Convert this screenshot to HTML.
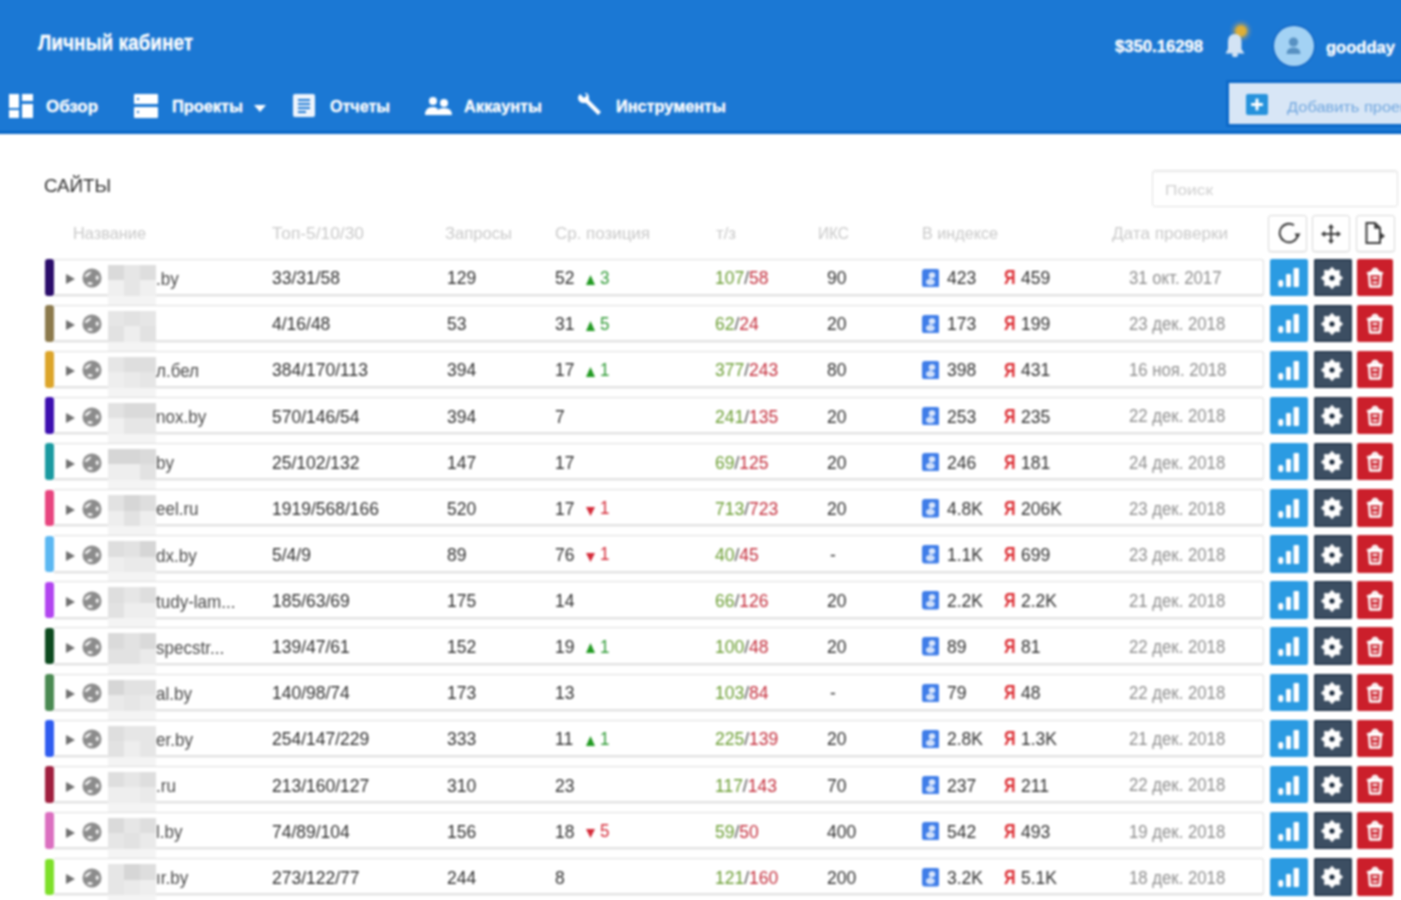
<!DOCTYPE html>
<html><head><meta charset="utf-8"><style>
html,body{margin:0;padding:0;width:1401px;height:900px;overflow:hidden;background:#fff;font-family:"Liberation Sans", sans-serif}
</style></head><body><div id="wrap" style="position:absolute;left:0;top:0;width:1401px;height:900px;filter:blur(1px)">
<div style="position:absolute;left:-12px;top:-12px;width:1425px;height:146px;background:#1b78d4"></div>
<div style="position:absolute;left:-12px;top:131px;width:1425px;height:3px;background:#0866c6"></div>
<svg style="position:absolute;left:9px;top:94px" width="24" height="24" viewBox="0 0 24 24"><g fill="#fff"><rect x="0" y="0" width="10" height="14"/><rect x="13" y="0" width="11" height="7"/><rect x="0" y="16" width="10" height="8"/><rect x="13" y="10" width="11" height="14"/></g></svg>
<svg style="position:absolute;left:134px;top:94px" width="24" height="24" viewBox="0 0 24 24"><g fill="#fff"><rect x="0" y="0" width="24" height="10" rx="1"/><rect x="0" y="13" width="24" height="11" rx="1"/></g><g fill="#1b78d4"><rect x="3" y="4" width="2" height="2"/><rect x="3" y="17" width="2" height="2"/></g></svg>
<svg style="position:absolute;left:254px;top:104.5px" width="12" height="7" viewBox="0 0 12 7"><path d="M0 0 L12 0 L6 7 Z" fill="#fff"/></svg>
<svg style="position:absolute;left:293px;top:94px" width="22" height="23" viewBox="0 0 22 23"><rect x="0" y="0" width="22" height="23" rx="2" fill="#eef4fc"/><g fill="#1b78d4"><rect x="5" y="5" width="12" height="2"/><rect x="5" y="9" width="12" height="2"/><rect x="5" y="13" width="12" height="2"/><rect x="5" y="17" width="8" height="2"/></g></svg>
<svg style="position:absolute;left:425px;top:96px" width="27" height="20" viewBox="0 0 27 20"><g fill="#fff"><circle cx="8" cy="5" r="4"/><path d="M0 19 Q0 11 8 11 Q13 11 13 15 L13 19 Z"/><circle cx="19" cy="7" r="4"/><path d="M11 19 Q11 12 19 12 Q27 12 27 19 Z"/></g></svg>
<svg style="position:absolute;left:577px;top:93px" width="25" height="23" viewBox="0 0 25 23"><path d="M3 1 L7 5 L10 2 L6 -1 Q12 -1 12 5 L12 7 L24 19 L21 22 L9 10 L7 10 Q1 10 1 4 Z" fill="#fff"/></svg>
<div style="position:absolute;left:1229px;top:19px;width:24px;height:24px;border-radius:50%;background:radial-gradient(circle, #e2b035 0, #dcae38 4.5px, rgba(190,165,85,0.6) 6.5px, rgba(120,140,150,0.35) 9px, rgba(30,120,211,0) 12px)"></div>
<svg style="position:absolute;left:1224px;top:32px" width="22" height="26" viewBox="0 0 22 26"><path d="M1.5 21.5 L20.5 21.5 L17.5 17 L17.5 9.5 Q17.5 2 11 2 Q4 2 4 9.5 L4 17 Z" fill="#d3e3f4"/><rect x="8" y="21" width="6" height="4" rx="2" fill="#d3e3f4"/></svg>
<div style="position:absolute;left:1274px;top:26px;width:39.5px;height:39.5px;border-radius:50%;background:#a3d2f4;box-shadow:0 0 0 1.5px #1366c4"></div>
<svg style="position:absolute;left:1283px;top:35px" width="21" height="21" viewBox="0 0 21 21"><circle cx="10.5" cy="7" r="4.6" fill="#5891c2"/><path d="M3.5 19 Q3.5 12.5 10.5 12.5 Q17.5 12.5 17.5 19 Z" fill="#5891c2"/></svg>
<div style="position:absolute;left:1229px;top:83px;width:190px;height:40.5px;background:#d8e6f6;box-shadow:0 0 0 3px #0c69c9"></div>
<svg style="position:absolute;left:1246px;top:94px" width="22" height="21" viewBox="0 0 22 21"><rect x="0" y="0" width="22" height="21" rx="2" fill="#2592dc"/><rect x="9.5" y="4.5" width="3" height="12" rx="1" fill="#fff"/><rect x="5" y="9" width="12" height="3" rx="1" fill="#fff"/></svg>
<div style="position:absolute;left:1152px;top:170px;width:246px;height:37px;border:1px solid #e2e2e2;border-radius:3px;box-sizing:border-box;box-shadow:inset 0 2px 1px rgba(0,0,0,0.045)"></div>
<div style="position:absolute;left:1268px;top:215px;width:39px;height:37px;border:1px solid #d9d9d9;border-radius:3px;box-sizing:border-box;background:#fff;box-shadow:0 1px 1px rgba(0,0,0,0.06)"></div>
<div style="position:absolute;left:1312px;top:215px;width:38px;height:37px;border:1px solid #d9d9d9;border-radius:3px;box-sizing:border-box;background:#fff;box-shadow:0 1px 1px rgba(0,0,0,0.06)"></div>
<div style="position:absolute;left:1356px;top:215px;width:39px;height:37px;border:1px solid #d9d9d9;border-radius:3px;box-sizing:border-box;background:#fff;box-shadow:0 1px 1px rgba(0,0,0,0.06)"></div>
<svg style="position:absolute;left:1275.5px;top:220px" width="26" height="26" viewBox="0 0 26 26"><path d="M17.93 5.11 A9.3 9.3 0 1 0 21.43 16.93" fill="none" stroke="#333" stroke-width="1.9"/><path d="M18.5 13.5 L24.5 13.5 L21.5 18.5 Z" fill="#333"/></svg>
<svg style="position:absolute;left:1321px;top:224px" width="20" height="20" viewBox="0 0 20 20"><g fill="#333"><rect x="9.1" y="3" width="1.8" height="14"/><rect x="3" y="9.1" width="14" height="1.8"/><path d="M10 0 L13 4 L7 4 Z"/><path d="M10 20 L13 16 L7 16 Z"/><path d="M0 10 L4 7 L4 13 Z"/><path d="M20 10 L16 7 L16 13 Z"/></g></svg>
<svg style="position:absolute;left:1364px;top:222px" width="24" height="23" viewBox="0 0 24 23"><path d="M2.5 1 L11 1 L16 6 L16 21 L2.5 21 Z" fill="none" stroke="#3a3a3a" stroke-width="2"/><path d="M11 1 L11 6 L16 6" fill="#3a3a3a" stroke="#3a3a3a" stroke-width="1.5"/><path d="M16 10 L21 14 L16 18 Z" fill="#3a3a3a"/></svg>
<div style="position:absolute;left:54px;top:258.50px;width:1209.5px;height:37.3px;border:1px solid #dedede;border-bottom:2px solid #e2e2e2;border-left:none;border-radius:0 3px 3px 0;box-sizing:border-box;background:#fff;box-shadow:0 1px 1px rgba(0,0,0,0.05)"></div>
<div style="position:absolute;left:44.5px;top:259.00px;width:9.5px;height:36.5px;background:#2b0d6b;border-radius:3px"></div>
<svg style="position:absolute;left:66px;top:274.20px" width="9" height="10" viewBox="0 0 9 10"><path d="M0 0 L9 5 L0 10 Z" fill="#707070"/></svg>
<svg style="position:absolute;left:82px;top:268.20px" width="20" height="20" viewBox="0 0 20 20"><circle cx="10" cy="10" r="9.5" fill="#8c8c8c"/><path d="M2.5 8.5 Q4 4.5 9.5 3.5 Q9 6 6 8 Q4.5 9.5 2.5 8.5 Z" fill="#f2f2f2"/><ellipse cx="15.2" cy="9.8" rx="1.6" ry="2.2" fill="#f4f4f4"/><path d="M5 15.5 Q8 12.5 11 15.5 Q8.5 18 5 15.5 Z" fill="#fff"/></svg>
<div style="position:absolute;left:108px;top:264.50px;width:16px;height:15.5px;background:rgb(218,218,218)"></div>
<div style="position:absolute;left:108px;top:280.00px;width:16px;height:15.5px;background:rgb(240,240,240)"></div>
<div style="position:absolute;left:124px;top:264.50px;width:16px;height:15.5px;background:rgb(230,230,230)"></div>
<div style="position:absolute;left:124px;top:280.00px;width:16px;height:15.5px;background:rgb(230,230,230)"></div>
<div style="position:absolute;left:140px;top:264.50px;width:16px;height:15.5px;background:rgb(222,222,222)"></div>
<div style="position:absolute;left:140px;top:280.00px;width:16px;height:15.5px;background:rgb(240,240,240)"></div>
<div style="position:absolute;left:108px;top:295.50px;width:48px;height:9.6px;background:#f4f4f4"></div>
<svg style="position:absolute;left:585.5px;top:274.50px" width="9" height="10" viewBox="0 0 9 10"><path d="M4.5 0 L9 10 L0 10 Z" fill="#229a22"/></svg>
<svg style="position:absolute;left:921.5px;top:268.50px" width="17.5" height="18.5" viewBox="0 0 18 19"><rect width="18" height="19" rx="3" fill="#3f7de8"/><ellipse cx="10.3" cy="6.3" rx="3.3" ry="3" fill="#dbe7fc"/><path d="M8.5 8 L11 8.5 L9.5 10.5 L7.5 10 Z" fill="#c9daf9"/><ellipse cx="8.6" cy="13.4" rx="4.6" ry="3.2" fill="#d2e1fb"/></svg>
<div style="position:absolute;left:1270px;top:258.50px;width:37.5px;height:37.5px;background:#2b9be2;border-radius:2px"></div>
<svg style="position:absolute;left:1278px;top:268.30px" width="22" height="20" viewBox="0 0 22 20"><g fill="#fff"><rect x="0.3" y="12" width="5" height="7" rx="2"/><rect x="8" y="6" width="5" height="13" rx="1"/><rect x="15.5" y="0" width="5.5" height="19" rx="1"/></g></svg>
<div style="position:absolute;left:1314px;top:258.50px;width:37.5px;height:37.5px;background:#3c4e62;border-radius:2px;box-shadow:inset 0 0 0 1.5px #23354a"></div>
<svg style="position:absolute;left:1321px;top:266.80px" width="22" height="22" viewBox="0 0 22 22"><path d="M11.00 0.70 L13.91 3.98 L18.28 3.72 L18.02 8.09 L21.30 11.00 L18.02 13.91 L18.28 18.28 L13.91 18.02 L11.00 21.30 L8.09 18.02 L3.72 18.28 L3.98 13.91 L0.70 11.00 L3.98 8.09 L3.72 3.72 L8.09 3.98 Z" fill="#fff" stroke="#fff" stroke-width="1.2" stroke-linejoin="round"/><circle cx="11" cy="11" r="2.6" fill="#1c2b3c"/></svg>
<div style="position:absolute;left:1357px;top:258.50px;width:36px;height:37.5px;background:#cb1f2b;border-radius:2px"></div>
<svg style="position:absolute;left:1365px;top:266.80px" width="20" height="22" viewBox="0 0 20 22"><g fill="none" stroke="#fff" stroke-width="2.3" stroke-linejoin="round"><path d="M4 7 L16 7 L15 19.5 L5 19.5 Z"/><path d="M2 6.5 Q10 3 18 6.5"/><path d="M7.5 4.5 Q7.5 2 10 2 Q12.5 2 12.5 4.5"/></g><g fill="#fff"><rect x="7.5" y="10" width="5" height="2"/><rect x="7.5" y="14.5" width="5" height="2"/></g></svg>
<div style="position:absolute;left:54px;top:304.62px;width:1209.5px;height:37.3px;border:1px solid #dedede;border-bottom:2px solid #e2e2e2;border-left:none;border-radius:0 3px 3px 0;box-sizing:border-box;background:#fff;box-shadow:0 1px 1px rgba(0,0,0,0.05)"></div>
<div style="position:absolute;left:44.5px;top:305.12px;width:9.5px;height:36.5px;background:#8c7a4c;border-radius:3px"></div>
<svg style="position:absolute;left:66px;top:320.32px" width="9" height="10" viewBox="0 0 9 10"><path d="M0 0 L9 5 L0 10 Z" fill="#707070"/></svg>
<svg style="position:absolute;left:82px;top:314.32px" width="20" height="20" viewBox="0 0 20 20"><circle cx="10" cy="10" r="9.5" fill="#8c8c8c"/><path d="M2.5 8.5 Q4 4.5 9.5 3.5 Q9 6 6 8 Q4.5 9.5 2.5 8.5 Z" fill="#f2f2f2"/><ellipse cx="15.2" cy="9.8" rx="1.6" ry="2.2" fill="#f4f4f4"/><path d="M5 15.5 Q8 12.5 11 15.5 Q8.5 18 5 15.5 Z" fill="#fff"/></svg>
<div style="position:absolute;left:108px;top:310.62px;width:16px;height:15.5px;background:rgb(230,230,230)"></div>
<div style="position:absolute;left:108px;top:326.12px;width:16px;height:15.5px;background:rgb(226,226,226)"></div>
<div style="position:absolute;left:124px;top:310.62px;width:16px;height:15.5px;background:rgb(226,226,226)"></div>
<div style="position:absolute;left:124px;top:326.12px;width:16px;height:15.5px;background:rgb(238,238,238)"></div>
<div style="position:absolute;left:140px;top:310.62px;width:16px;height:15.5px;background:rgb(230,230,230)"></div>
<div style="position:absolute;left:140px;top:326.12px;width:16px;height:15.5px;background:rgb(226,226,226)"></div>
<div style="position:absolute;left:108px;top:341.62px;width:48px;height:9.6px;background:#f4f4f4"></div>
<svg style="position:absolute;left:585.5px;top:320.62px" width="9" height="10" viewBox="0 0 9 10"><path d="M4.5 0 L9 10 L0 10 Z" fill="#229a22"/></svg>
<svg style="position:absolute;left:921.5px;top:314.62px" width="17.5" height="18.5" viewBox="0 0 18 19"><rect width="18" height="19" rx="3" fill="#3f7de8"/><ellipse cx="10.3" cy="6.3" rx="3.3" ry="3" fill="#dbe7fc"/><path d="M8.5 8 L11 8.5 L9.5 10.5 L7.5 10 Z" fill="#c9daf9"/><ellipse cx="8.6" cy="13.4" rx="4.6" ry="3.2" fill="#d2e1fb"/></svg>
<div style="position:absolute;left:1270px;top:304.62px;width:37.5px;height:37.5px;background:#2b9be2;border-radius:2px"></div>
<svg style="position:absolute;left:1278px;top:314.42px" width="22" height="20" viewBox="0 0 22 20"><g fill="#fff"><rect x="0.3" y="12" width="5" height="7" rx="2"/><rect x="8" y="6" width="5" height="13" rx="1"/><rect x="15.5" y="0" width="5.5" height="19" rx="1"/></g></svg>
<div style="position:absolute;left:1314px;top:304.62px;width:37.5px;height:37.5px;background:#3c4e62;border-radius:2px;box-shadow:inset 0 0 0 1.5px #23354a"></div>
<svg style="position:absolute;left:1321px;top:312.92px" width="22" height="22" viewBox="0 0 22 22"><path d="M11.00 0.70 L13.91 3.98 L18.28 3.72 L18.02 8.09 L21.30 11.00 L18.02 13.91 L18.28 18.28 L13.91 18.02 L11.00 21.30 L8.09 18.02 L3.72 18.28 L3.98 13.91 L0.70 11.00 L3.98 8.09 L3.72 3.72 L8.09 3.98 Z" fill="#fff" stroke="#fff" stroke-width="1.2" stroke-linejoin="round"/><circle cx="11" cy="11" r="2.6" fill="#1c2b3c"/></svg>
<div style="position:absolute;left:1357px;top:304.62px;width:36px;height:37.5px;background:#cb1f2b;border-radius:2px"></div>
<svg style="position:absolute;left:1365px;top:312.92px" width="20" height="22" viewBox="0 0 20 22"><g fill="none" stroke="#fff" stroke-width="2.3" stroke-linejoin="round"><path d="M4 7 L16 7 L15 19.5 L5 19.5 Z"/><path d="M2 6.5 Q10 3 18 6.5"/><path d="M7.5 4.5 Q7.5 2 10 2 Q12.5 2 12.5 4.5"/></g><g fill="#fff"><rect x="7.5" y="10" width="5" height="2"/><rect x="7.5" y="14.5" width="5" height="2"/></g></svg>
<div style="position:absolute;left:54px;top:350.74px;width:1209.5px;height:37.3px;border:1px solid #dedede;border-bottom:2px solid #e2e2e2;border-left:none;border-radius:0 3px 3px 0;box-sizing:border-box;background:#fff;box-shadow:0 1px 1px rgba(0,0,0,0.05)"></div>
<div style="position:absolute;left:44.5px;top:351.24px;width:9.5px;height:36.5px;background:#dca52a;border-radius:3px"></div>
<svg style="position:absolute;left:66px;top:366.44px" width="9" height="10" viewBox="0 0 9 10"><path d="M0 0 L9 5 L0 10 Z" fill="#707070"/></svg>
<svg style="position:absolute;left:82px;top:360.44px" width="20" height="20" viewBox="0 0 20 20"><circle cx="10" cy="10" r="9.5" fill="#8c8c8c"/><path d="M2.5 8.5 Q4 4.5 9.5 3.5 Q9 6 6 8 Q4.5 9.5 2.5 8.5 Z" fill="#f2f2f2"/><ellipse cx="15.2" cy="9.8" rx="1.6" ry="2.2" fill="#f4f4f4"/><path d="M5 15.5 Q8 12.5 11 15.5 Q8.5 18 5 15.5 Z" fill="#fff"/></svg>
<div style="position:absolute;left:108px;top:356.74px;width:16px;height:15.5px;background:rgb(230,230,230)"></div>
<div style="position:absolute;left:108px;top:372.24px;width:16px;height:15.5px;background:rgb(238,238,238)"></div>
<div style="position:absolute;left:124px;top:356.74px;width:16px;height:15.5px;background:rgb(222,222,222)"></div>
<div style="position:absolute;left:124px;top:372.24px;width:16px;height:15.5px;background:rgb(234,234,234)"></div>
<div style="position:absolute;left:140px;top:356.74px;width:16px;height:15.5px;background:rgb(222,222,222)"></div>
<div style="position:absolute;left:140px;top:372.24px;width:16px;height:15.5px;background:rgb(230,230,230)"></div>
<div style="position:absolute;left:108px;top:387.74px;width:48px;height:9.6px;background:#f4f4f4"></div>
<svg style="position:absolute;left:585.5px;top:366.74px" width="9" height="10" viewBox="0 0 9 10"><path d="M4.5 0 L9 10 L0 10 Z" fill="#229a22"/></svg>
<svg style="position:absolute;left:921.5px;top:360.74px" width="17.5" height="18.5" viewBox="0 0 18 19"><rect width="18" height="19" rx="3" fill="#3f7de8"/><ellipse cx="10.3" cy="6.3" rx="3.3" ry="3" fill="#dbe7fc"/><path d="M8.5 8 L11 8.5 L9.5 10.5 L7.5 10 Z" fill="#c9daf9"/><ellipse cx="8.6" cy="13.4" rx="4.6" ry="3.2" fill="#d2e1fb"/></svg>
<div style="position:absolute;left:1270px;top:350.74px;width:37.5px;height:37.5px;background:#2b9be2;border-radius:2px"></div>
<svg style="position:absolute;left:1278px;top:360.54px" width="22" height="20" viewBox="0 0 22 20"><g fill="#fff"><rect x="0.3" y="12" width="5" height="7" rx="2"/><rect x="8" y="6" width="5" height="13" rx="1"/><rect x="15.5" y="0" width="5.5" height="19" rx="1"/></g></svg>
<div style="position:absolute;left:1314px;top:350.74px;width:37.5px;height:37.5px;background:#3c4e62;border-radius:2px;box-shadow:inset 0 0 0 1.5px #23354a"></div>
<svg style="position:absolute;left:1321px;top:359.04px" width="22" height="22" viewBox="0 0 22 22"><path d="M11.00 0.70 L13.91 3.98 L18.28 3.72 L18.02 8.09 L21.30 11.00 L18.02 13.91 L18.28 18.28 L13.91 18.02 L11.00 21.30 L8.09 18.02 L3.72 18.28 L3.98 13.91 L0.70 11.00 L3.98 8.09 L3.72 3.72 L8.09 3.98 Z" fill="#fff" stroke="#fff" stroke-width="1.2" stroke-linejoin="round"/><circle cx="11" cy="11" r="2.6" fill="#1c2b3c"/></svg>
<div style="position:absolute;left:1357px;top:350.74px;width:36px;height:37.5px;background:#cb1f2b;border-radius:2px"></div>
<svg style="position:absolute;left:1365px;top:359.04px" width="20" height="22" viewBox="0 0 20 22"><g fill="none" stroke="#fff" stroke-width="2.3" stroke-linejoin="round"><path d="M4 7 L16 7 L15 19.5 L5 19.5 Z"/><path d="M2 6.5 Q10 3 18 6.5"/><path d="M7.5 4.5 Q7.5 2 10 2 Q12.5 2 12.5 4.5"/></g><g fill="#fff"><rect x="7.5" y="10" width="5" height="2"/><rect x="7.5" y="14.5" width="5" height="2"/></g></svg>
<div style="position:absolute;left:54px;top:396.86px;width:1209.5px;height:37.3px;border:1px solid #dedede;border-bottom:2px solid #e2e2e2;border-left:none;border-radius:0 3px 3px 0;box-sizing:border-box;background:#fff;box-shadow:0 1px 1px rgba(0,0,0,0.05)"></div>
<div style="position:absolute;left:44.5px;top:397.36px;width:9.5px;height:36.5px;background:#3d0fb0;border-radius:3px"></div>
<svg style="position:absolute;left:66px;top:412.56px" width="9" height="10" viewBox="0 0 9 10"><path d="M0 0 L9 5 L0 10 Z" fill="#707070"/></svg>
<svg style="position:absolute;left:82px;top:406.56px" width="20" height="20" viewBox="0 0 20 20"><circle cx="10" cy="10" r="9.5" fill="#8c8c8c"/><path d="M2.5 8.5 Q4 4.5 9.5 3.5 Q9 6 6 8 Q4.5 9.5 2.5 8.5 Z" fill="#f2f2f2"/><ellipse cx="15.2" cy="9.8" rx="1.6" ry="2.2" fill="#f4f4f4"/><path d="M5 15.5 Q8 12.5 11 15.5 Q8.5 18 5 15.5 Z" fill="#fff"/></svg>
<div style="position:absolute;left:108px;top:402.86px;width:16px;height:15.5px;background:rgb(226,226,226)"></div>
<div style="position:absolute;left:108px;top:418.36px;width:16px;height:15.5px;background:rgb(240,240,240)"></div>
<div style="position:absolute;left:124px;top:402.86px;width:16px;height:15.5px;background:rgb(218,218,218)"></div>
<div style="position:absolute;left:124px;top:418.36px;width:16px;height:15.5px;background:rgb(230,230,230)"></div>
<div style="position:absolute;left:140px;top:402.86px;width:16px;height:15.5px;background:rgb(218,218,218)"></div>
<div style="position:absolute;left:140px;top:418.36px;width:16px;height:15.5px;background:rgb(230,230,230)"></div>
<div style="position:absolute;left:108px;top:433.86px;width:48px;height:9.6px;background:#f4f4f4"></div>
<svg style="position:absolute;left:921.5px;top:406.86px" width="17.5" height="18.5" viewBox="0 0 18 19"><rect width="18" height="19" rx="3" fill="#3f7de8"/><ellipse cx="10.3" cy="6.3" rx="3.3" ry="3" fill="#dbe7fc"/><path d="M8.5 8 L11 8.5 L9.5 10.5 L7.5 10 Z" fill="#c9daf9"/><ellipse cx="8.6" cy="13.4" rx="4.6" ry="3.2" fill="#d2e1fb"/></svg>
<div style="position:absolute;left:1270px;top:396.86px;width:37.5px;height:37.5px;background:#2b9be2;border-radius:2px"></div>
<svg style="position:absolute;left:1278px;top:406.66px" width="22" height="20" viewBox="0 0 22 20"><g fill="#fff"><rect x="0.3" y="12" width="5" height="7" rx="2"/><rect x="8" y="6" width="5" height="13" rx="1"/><rect x="15.5" y="0" width="5.5" height="19" rx="1"/></g></svg>
<div style="position:absolute;left:1314px;top:396.86px;width:37.5px;height:37.5px;background:#3c4e62;border-radius:2px;box-shadow:inset 0 0 0 1.5px #23354a"></div>
<svg style="position:absolute;left:1321px;top:405.16px" width="22" height="22" viewBox="0 0 22 22"><path d="M11.00 0.70 L13.91 3.98 L18.28 3.72 L18.02 8.09 L21.30 11.00 L18.02 13.91 L18.28 18.28 L13.91 18.02 L11.00 21.30 L8.09 18.02 L3.72 18.28 L3.98 13.91 L0.70 11.00 L3.98 8.09 L3.72 3.72 L8.09 3.98 Z" fill="#fff" stroke="#fff" stroke-width="1.2" stroke-linejoin="round"/><circle cx="11" cy="11" r="2.6" fill="#1c2b3c"/></svg>
<div style="position:absolute;left:1357px;top:396.86px;width:36px;height:37.5px;background:#cb1f2b;border-radius:2px"></div>
<svg style="position:absolute;left:1365px;top:405.16px" width="20" height="22" viewBox="0 0 20 22"><g fill="none" stroke="#fff" stroke-width="2.3" stroke-linejoin="round"><path d="M4 7 L16 7 L15 19.5 L5 19.5 Z"/><path d="M2 6.5 Q10 3 18 6.5"/><path d="M7.5 4.5 Q7.5 2 10 2 Q12.5 2 12.5 4.5"/></g><g fill="#fff"><rect x="7.5" y="10" width="5" height="2"/><rect x="7.5" y="14.5" width="5" height="2"/></g></svg>
<div style="position:absolute;left:54px;top:442.98px;width:1209.5px;height:37.3px;border:1px solid #dedede;border-bottom:2px solid #e2e2e2;border-left:none;border-radius:0 3px 3px 0;box-sizing:border-box;background:#fff;box-shadow:0 1px 1px rgba(0,0,0,0.05)"></div>
<div style="position:absolute;left:44.5px;top:443.48px;width:9.5px;height:36.5px;background:#1a9aa0;border-radius:3px"></div>
<svg style="position:absolute;left:66px;top:458.68px" width="9" height="10" viewBox="0 0 9 10"><path d="M0 0 L9 5 L0 10 Z" fill="#707070"/></svg>
<svg style="position:absolute;left:82px;top:452.68px" width="20" height="20" viewBox="0 0 20 20"><circle cx="10" cy="10" r="9.5" fill="#8c8c8c"/><path d="M2.5 8.5 Q4 4.5 9.5 3.5 Q9 6 6 8 Q4.5 9.5 2.5 8.5 Z" fill="#f2f2f2"/><ellipse cx="15.2" cy="9.8" rx="1.6" ry="2.2" fill="#f4f4f4"/><path d="M5 15.5 Q8 12.5 11 15.5 Q8.5 18 5 15.5 Z" fill="#fff"/></svg>
<div style="position:absolute;left:108px;top:448.98px;width:16px;height:15.5px;background:rgb(214,214,214)"></div>
<div style="position:absolute;left:108px;top:464.48px;width:16px;height:15.5px;background:rgb(238,238,238)"></div>
<div style="position:absolute;left:124px;top:448.98px;width:16px;height:15.5px;background:rgb(214,214,214)"></div>
<div style="position:absolute;left:124px;top:464.48px;width:16px;height:15.5px;background:rgb(238,238,238)"></div>
<div style="position:absolute;left:140px;top:448.98px;width:16px;height:15.5px;background:rgb(218,218,218)"></div>
<div style="position:absolute;left:140px;top:464.48px;width:16px;height:15.5px;background:rgb(226,226,226)"></div>
<div style="position:absolute;left:108px;top:479.98px;width:48px;height:9.6px;background:#f4f4f4"></div>
<svg style="position:absolute;left:921.5px;top:452.98px" width="17.5" height="18.5" viewBox="0 0 18 19"><rect width="18" height="19" rx="3" fill="#3f7de8"/><ellipse cx="10.3" cy="6.3" rx="3.3" ry="3" fill="#dbe7fc"/><path d="M8.5 8 L11 8.5 L9.5 10.5 L7.5 10 Z" fill="#c9daf9"/><ellipse cx="8.6" cy="13.4" rx="4.6" ry="3.2" fill="#d2e1fb"/></svg>
<div style="position:absolute;left:1270px;top:442.98px;width:37.5px;height:37.5px;background:#2b9be2;border-radius:2px"></div>
<svg style="position:absolute;left:1278px;top:452.78px" width="22" height="20" viewBox="0 0 22 20"><g fill="#fff"><rect x="0.3" y="12" width="5" height="7" rx="2"/><rect x="8" y="6" width="5" height="13" rx="1"/><rect x="15.5" y="0" width="5.5" height="19" rx="1"/></g></svg>
<div style="position:absolute;left:1314px;top:442.98px;width:37.5px;height:37.5px;background:#3c4e62;border-radius:2px;box-shadow:inset 0 0 0 1.5px #23354a"></div>
<svg style="position:absolute;left:1321px;top:451.28px" width="22" height="22" viewBox="0 0 22 22"><path d="M11.00 0.70 L13.91 3.98 L18.28 3.72 L18.02 8.09 L21.30 11.00 L18.02 13.91 L18.28 18.28 L13.91 18.02 L11.00 21.30 L8.09 18.02 L3.72 18.28 L3.98 13.91 L0.70 11.00 L3.98 8.09 L3.72 3.72 L8.09 3.98 Z" fill="#fff" stroke="#fff" stroke-width="1.2" stroke-linejoin="round"/><circle cx="11" cy="11" r="2.6" fill="#1c2b3c"/></svg>
<div style="position:absolute;left:1357px;top:442.98px;width:36px;height:37.5px;background:#cb1f2b;border-radius:2px"></div>
<svg style="position:absolute;left:1365px;top:451.28px" width="20" height="22" viewBox="0 0 20 22"><g fill="none" stroke="#fff" stroke-width="2.3" stroke-linejoin="round"><path d="M4 7 L16 7 L15 19.5 L5 19.5 Z"/><path d="M2 6.5 Q10 3 18 6.5"/><path d="M7.5 4.5 Q7.5 2 10 2 Q12.5 2 12.5 4.5"/></g><g fill="#fff"><rect x="7.5" y="10" width="5" height="2"/><rect x="7.5" y="14.5" width="5" height="2"/></g></svg>
<div style="position:absolute;left:54px;top:489.10px;width:1209.5px;height:37.3px;border:1px solid #dedede;border-bottom:2px solid #e2e2e2;border-left:none;border-radius:0 3px 3px 0;box-sizing:border-box;background:#fff;box-shadow:0 1px 1px rgba(0,0,0,0.05)"></div>
<div style="position:absolute;left:44.5px;top:489.60px;width:9.5px;height:36.5px;background:#e8457f;border-radius:3px"></div>
<svg style="position:absolute;left:66px;top:504.80px" width="9" height="10" viewBox="0 0 9 10"><path d="M0 0 L9 5 L0 10 Z" fill="#707070"/></svg>
<svg style="position:absolute;left:82px;top:498.80px" width="20" height="20" viewBox="0 0 20 20"><circle cx="10" cy="10" r="9.5" fill="#8c8c8c"/><path d="M2.5 8.5 Q4 4.5 9.5 3.5 Q9 6 6 8 Q4.5 9.5 2.5 8.5 Z" fill="#f2f2f2"/><ellipse cx="15.2" cy="9.8" rx="1.6" ry="2.2" fill="#f4f4f4"/><path d="M5 15.5 Q8 12.5 11 15.5 Q8.5 18 5 15.5 Z" fill="#fff"/></svg>
<div style="position:absolute;left:108px;top:495.10px;width:16px;height:15.5px;background:rgb(226,226,226)"></div>
<div style="position:absolute;left:108px;top:510.60px;width:16px;height:15.5px;background:rgb(238,238,238)"></div>
<div style="position:absolute;left:124px;top:495.10px;width:16px;height:15.5px;background:rgb(214,214,214)"></div>
<div style="position:absolute;left:124px;top:510.60px;width:16px;height:15.5px;background:rgb(226,226,226)"></div>
<div style="position:absolute;left:140px;top:495.10px;width:16px;height:15.5px;background:rgb(222,222,222)"></div>
<div style="position:absolute;left:140px;top:510.60px;width:16px;height:15.5px;background:rgb(238,238,238)"></div>
<div style="position:absolute;left:108px;top:526.10px;width:48px;height:9.6px;background:#f4f4f4"></div>
<svg style="position:absolute;left:585.5px;top:506.60px" width="9" height="9" viewBox="0 0 9 9"><path d="M0 0 L9 0 L4.5 9 Z" fill="#d42a38"/></svg>
<svg style="position:absolute;left:921.5px;top:499.10px" width="17.5" height="18.5" viewBox="0 0 18 19"><rect width="18" height="19" rx="3" fill="#3f7de8"/><ellipse cx="10.3" cy="6.3" rx="3.3" ry="3" fill="#dbe7fc"/><path d="M8.5 8 L11 8.5 L9.5 10.5 L7.5 10 Z" fill="#c9daf9"/><ellipse cx="8.6" cy="13.4" rx="4.6" ry="3.2" fill="#d2e1fb"/></svg>
<div style="position:absolute;left:1270px;top:489.10px;width:37.5px;height:37.5px;background:#2b9be2;border-radius:2px"></div>
<svg style="position:absolute;left:1278px;top:498.90px" width="22" height="20" viewBox="0 0 22 20"><g fill="#fff"><rect x="0.3" y="12" width="5" height="7" rx="2"/><rect x="8" y="6" width="5" height="13" rx="1"/><rect x="15.5" y="0" width="5.5" height="19" rx="1"/></g></svg>
<div style="position:absolute;left:1314px;top:489.10px;width:37.5px;height:37.5px;background:#3c4e62;border-radius:2px;box-shadow:inset 0 0 0 1.5px #23354a"></div>
<svg style="position:absolute;left:1321px;top:497.40px" width="22" height="22" viewBox="0 0 22 22"><path d="M11.00 0.70 L13.91 3.98 L18.28 3.72 L18.02 8.09 L21.30 11.00 L18.02 13.91 L18.28 18.28 L13.91 18.02 L11.00 21.30 L8.09 18.02 L3.72 18.28 L3.98 13.91 L0.70 11.00 L3.98 8.09 L3.72 3.72 L8.09 3.98 Z" fill="#fff" stroke="#fff" stroke-width="1.2" stroke-linejoin="round"/><circle cx="11" cy="11" r="2.6" fill="#1c2b3c"/></svg>
<div style="position:absolute;left:1357px;top:489.10px;width:36px;height:37.5px;background:#cb1f2b;border-radius:2px"></div>
<svg style="position:absolute;left:1365px;top:497.40px" width="20" height="22" viewBox="0 0 20 22"><g fill="none" stroke="#fff" stroke-width="2.3" stroke-linejoin="round"><path d="M4 7 L16 7 L15 19.5 L5 19.5 Z"/><path d="M2 6.5 Q10 3 18 6.5"/><path d="M7.5 4.5 Q7.5 2 10 2 Q12.5 2 12.5 4.5"/></g><g fill="#fff"><rect x="7.5" y="10" width="5" height="2"/><rect x="7.5" y="14.5" width="5" height="2"/></g></svg>
<div style="position:absolute;left:54px;top:535.22px;width:1209.5px;height:37.3px;border:1px solid #dedede;border-bottom:2px solid #e2e2e2;border-left:none;border-radius:0 3px 3px 0;box-sizing:border-box;background:#fff;box-shadow:0 1px 1px rgba(0,0,0,0.05)"></div>
<div style="position:absolute;left:44.5px;top:535.72px;width:9.5px;height:36.5px;background:#5cb8f2;border-radius:3px"></div>
<svg style="position:absolute;left:66px;top:550.92px" width="9" height="10" viewBox="0 0 9 10"><path d="M0 0 L9 5 L0 10 Z" fill="#707070"/></svg>
<svg style="position:absolute;left:82px;top:544.92px" width="20" height="20" viewBox="0 0 20 20"><circle cx="10" cy="10" r="9.5" fill="#8c8c8c"/><path d="M2.5 8.5 Q4 4.5 9.5 3.5 Q9 6 6 8 Q4.5 9.5 2.5 8.5 Z" fill="#f2f2f2"/><ellipse cx="15.2" cy="9.8" rx="1.6" ry="2.2" fill="#f4f4f4"/><path d="M5 15.5 Q8 12.5 11 15.5 Q8.5 18 5 15.5 Z" fill="#fff"/></svg>
<div style="position:absolute;left:108px;top:541.22px;width:16px;height:15.5px;background:rgb(222,222,222)"></div>
<div style="position:absolute;left:108px;top:556.72px;width:16px;height:15.5px;background:rgb(238,238,238)"></div>
<div style="position:absolute;left:124px;top:541.22px;width:16px;height:15.5px;background:rgb(226,226,226)"></div>
<div style="position:absolute;left:124px;top:556.72px;width:16px;height:15.5px;background:rgb(234,234,234)"></div>
<div style="position:absolute;left:140px;top:541.22px;width:16px;height:15.5px;background:rgb(214,214,214)"></div>
<div style="position:absolute;left:140px;top:556.72px;width:16px;height:15.5px;background:rgb(234,234,234)"></div>
<div style="position:absolute;left:108px;top:572.22px;width:48px;height:9.6px;background:#f4f4f4"></div>
<svg style="position:absolute;left:585.5px;top:552.72px" width="9" height="9" viewBox="0 0 9 9"><path d="M0 0 L9 0 L4.5 9 Z" fill="#d42a38"/></svg>
<svg style="position:absolute;left:921.5px;top:545.22px" width="17.5" height="18.5" viewBox="0 0 18 19"><rect width="18" height="19" rx="3" fill="#3f7de8"/><ellipse cx="10.3" cy="6.3" rx="3.3" ry="3" fill="#dbe7fc"/><path d="M8.5 8 L11 8.5 L9.5 10.5 L7.5 10 Z" fill="#c9daf9"/><ellipse cx="8.6" cy="13.4" rx="4.6" ry="3.2" fill="#d2e1fb"/></svg>
<div style="position:absolute;left:1270px;top:535.22px;width:37.5px;height:37.5px;background:#2b9be2;border-radius:2px"></div>
<svg style="position:absolute;left:1278px;top:545.02px" width="22" height="20" viewBox="0 0 22 20"><g fill="#fff"><rect x="0.3" y="12" width="5" height="7" rx="2"/><rect x="8" y="6" width="5" height="13" rx="1"/><rect x="15.5" y="0" width="5.5" height="19" rx="1"/></g></svg>
<div style="position:absolute;left:1314px;top:535.22px;width:37.5px;height:37.5px;background:#3c4e62;border-radius:2px;box-shadow:inset 0 0 0 1.5px #23354a"></div>
<svg style="position:absolute;left:1321px;top:543.52px" width="22" height="22" viewBox="0 0 22 22"><path d="M11.00 0.70 L13.91 3.98 L18.28 3.72 L18.02 8.09 L21.30 11.00 L18.02 13.91 L18.28 18.28 L13.91 18.02 L11.00 21.30 L8.09 18.02 L3.72 18.28 L3.98 13.91 L0.70 11.00 L3.98 8.09 L3.72 3.72 L8.09 3.98 Z" fill="#fff" stroke="#fff" stroke-width="1.2" stroke-linejoin="round"/><circle cx="11" cy="11" r="2.6" fill="#1c2b3c"/></svg>
<div style="position:absolute;left:1357px;top:535.22px;width:36px;height:37.5px;background:#cb1f2b;border-radius:2px"></div>
<svg style="position:absolute;left:1365px;top:543.52px" width="20" height="22" viewBox="0 0 20 22"><g fill="none" stroke="#fff" stroke-width="2.3" stroke-linejoin="round"><path d="M4 7 L16 7 L15 19.5 L5 19.5 Z"/><path d="M2 6.5 Q10 3 18 6.5"/><path d="M7.5 4.5 Q7.5 2 10 2 Q12.5 2 12.5 4.5"/></g><g fill="#fff"><rect x="7.5" y="10" width="5" height="2"/><rect x="7.5" y="14.5" width="5" height="2"/></g></svg>
<div style="position:absolute;left:54px;top:581.34px;width:1209.5px;height:37.3px;border:1px solid #dedede;border-bottom:2px solid #e2e2e2;border-left:none;border-radius:0 3px 3px 0;box-sizing:border-box;background:#fff;box-shadow:0 1px 1px rgba(0,0,0,0.05)"></div>
<div style="position:absolute;left:44.5px;top:581.84px;width:9.5px;height:36.5px;background:#b245f0;border-radius:3px"></div>
<svg style="position:absolute;left:66px;top:597.04px" width="9" height="10" viewBox="0 0 9 10"><path d="M0 0 L9 5 L0 10 Z" fill="#707070"/></svg>
<svg style="position:absolute;left:82px;top:591.04px" width="20" height="20" viewBox="0 0 20 20"><circle cx="10" cy="10" r="9.5" fill="#8c8c8c"/><path d="M2.5 8.5 Q4 4.5 9.5 3.5 Q9 6 6 8 Q4.5 9.5 2.5 8.5 Z" fill="#f2f2f2"/><ellipse cx="15.2" cy="9.8" rx="1.6" ry="2.2" fill="#f4f4f4"/><path d="M5 15.5 Q8 12.5 11 15.5 Q8.5 18 5 15.5 Z" fill="#fff"/></svg>
<div style="position:absolute;left:108px;top:587.34px;width:16px;height:15.5px;background:rgb(222,222,222)"></div>
<div style="position:absolute;left:108px;top:602.84px;width:16px;height:15.5px;background:rgb(226,226,226)"></div>
<div style="position:absolute;left:124px;top:587.34px;width:16px;height:15.5px;background:rgb(230,230,230)"></div>
<div style="position:absolute;left:124px;top:602.84px;width:16px;height:15.5px;background:rgb(238,238,238)"></div>
<div style="position:absolute;left:140px;top:587.34px;width:16px;height:15.5px;background:rgb(222,222,222)"></div>
<div style="position:absolute;left:140px;top:602.84px;width:16px;height:15.5px;background:rgb(238,238,238)"></div>
<div style="position:absolute;left:108px;top:618.34px;width:48px;height:9.6px;background:#f4f4f4"></div>
<svg style="position:absolute;left:921.5px;top:591.34px" width="17.5" height="18.5" viewBox="0 0 18 19"><rect width="18" height="19" rx="3" fill="#3f7de8"/><ellipse cx="10.3" cy="6.3" rx="3.3" ry="3" fill="#dbe7fc"/><path d="M8.5 8 L11 8.5 L9.5 10.5 L7.5 10 Z" fill="#c9daf9"/><ellipse cx="8.6" cy="13.4" rx="4.6" ry="3.2" fill="#d2e1fb"/></svg>
<div style="position:absolute;left:1270px;top:581.34px;width:37.5px;height:37.5px;background:#2b9be2;border-radius:2px"></div>
<svg style="position:absolute;left:1278px;top:591.14px" width="22" height="20" viewBox="0 0 22 20"><g fill="#fff"><rect x="0.3" y="12" width="5" height="7" rx="2"/><rect x="8" y="6" width="5" height="13" rx="1"/><rect x="15.5" y="0" width="5.5" height="19" rx="1"/></g></svg>
<div style="position:absolute;left:1314px;top:581.34px;width:37.5px;height:37.5px;background:#3c4e62;border-radius:2px;box-shadow:inset 0 0 0 1.5px #23354a"></div>
<svg style="position:absolute;left:1321px;top:589.64px" width="22" height="22" viewBox="0 0 22 22"><path d="M11.00 0.70 L13.91 3.98 L18.28 3.72 L18.02 8.09 L21.30 11.00 L18.02 13.91 L18.28 18.28 L13.91 18.02 L11.00 21.30 L8.09 18.02 L3.72 18.28 L3.98 13.91 L0.70 11.00 L3.98 8.09 L3.72 3.72 L8.09 3.98 Z" fill="#fff" stroke="#fff" stroke-width="1.2" stroke-linejoin="round"/><circle cx="11" cy="11" r="2.6" fill="#1c2b3c"/></svg>
<div style="position:absolute;left:1357px;top:581.34px;width:36px;height:37.5px;background:#cb1f2b;border-radius:2px"></div>
<svg style="position:absolute;left:1365px;top:589.64px" width="20" height="22" viewBox="0 0 20 22"><g fill="none" stroke="#fff" stroke-width="2.3" stroke-linejoin="round"><path d="M4 7 L16 7 L15 19.5 L5 19.5 Z"/><path d="M2 6.5 Q10 3 18 6.5"/><path d="M7.5 4.5 Q7.5 2 10 2 Q12.5 2 12.5 4.5"/></g><g fill="#fff"><rect x="7.5" y="10" width="5" height="2"/><rect x="7.5" y="14.5" width="5" height="2"/></g></svg>
<div style="position:absolute;left:54px;top:627.46px;width:1209.5px;height:37.3px;border:1px solid #dedede;border-bottom:2px solid #e2e2e2;border-left:none;border-radius:0 3px 3px 0;box-sizing:border-box;background:#fff;box-shadow:0 1px 1px rgba(0,0,0,0.05)"></div>
<div style="position:absolute;left:44.5px;top:627.96px;width:9.5px;height:36.5px;background:#0d4a1f;border-radius:3px"></div>
<svg style="position:absolute;left:66px;top:643.16px" width="9" height="10" viewBox="0 0 9 10"><path d="M0 0 L9 5 L0 10 Z" fill="#707070"/></svg>
<svg style="position:absolute;left:82px;top:637.16px" width="20" height="20" viewBox="0 0 20 20"><circle cx="10" cy="10" r="9.5" fill="#8c8c8c"/><path d="M2.5 8.5 Q4 4.5 9.5 3.5 Q9 6 6 8 Q4.5 9.5 2.5 8.5 Z" fill="#f2f2f2"/><ellipse cx="15.2" cy="9.8" rx="1.6" ry="2.2" fill="#f4f4f4"/><path d="M5 15.5 Q8 12.5 11 15.5 Q8.5 18 5 15.5 Z" fill="#fff"/></svg>
<div style="position:absolute;left:108px;top:633.46px;width:16px;height:15.5px;background:rgb(218,218,218)"></div>
<div style="position:absolute;left:108px;top:648.96px;width:16px;height:15.5px;background:rgb(226,226,226)"></div>
<div style="position:absolute;left:124px;top:633.46px;width:16px;height:15.5px;background:rgb(226,226,226)"></div>
<div style="position:absolute;left:124px;top:648.96px;width:16px;height:15.5px;background:rgb(226,226,226)"></div>
<div style="position:absolute;left:140px;top:633.46px;width:16px;height:15.5px;background:rgb(218,218,218)"></div>
<div style="position:absolute;left:140px;top:648.96px;width:16px;height:15.5px;background:rgb(234,234,234)"></div>
<div style="position:absolute;left:108px;top:664.46px;width:48px;height:9.6px;background:#f4f4f4"></div>
<svg style="position:absolute;left:585.5px;top:643.46px" width="9" height="10" viewBox="0 0 9 10"><path d="M4.5 0 L9 10 L0 10 Z" fill="#229a22"/></svg>
<svg style="position:absolute;left:921.5px;top:637.46px" width="17.5" height="18.5" viewBox="0 0 18 19"><rect width="18" height="19" rx="3" fill="#3f7de8"/><ellipse cx="10.3" cy="6.3" rx="3.3" ry="3" fill="#dbe7fc"/><path d="M8.5 8 L11 8.5 L9.5 10.5 L7.5 10 Z" fill="#c9daf9"/><ellipse cx="8.6" cy="13.4" rx="4.6" ry="3.2" fill="#d2e1fb"/></svg>
<div style="position:absolute;left:1270px;top:627.46px;width:37.5px;height:37.5px;background:#2b9be2;border-radius:2px"></div>
<svg style="position:absolute;left:1278px;top:637.26px" width="22" height="20" viewBox="0 0 22 20"><g fill="#fff"><rect x="0.3" y="12" width="5" height="7" rx="2"/><rect x="8" y="6" width="5" height="13" rx="1"/><rect x="15.5" y="0" width="5.5" height="19" rx="1"/></g></svg>
<div style="position:absolute;left:1314px;top:627.46px;width:37.5px;height:37.5px;background:#3c4e62;border-radius:2px;box-shadow:inset 0 0 0 1.5px #23354a"></div>
<svg style="position:absolute;left:1321px;top:635.76px" width="22" height="22" viewBox="0 0 22 22"><path d="M11.00 0.70 L13.91 3.98 L18.28 3.72 L18.02 8.09 L21.30 11.00 L18.02 13.91 L18.28 18.28 L13.91 18.02 L11.00 21.30 L8.09 18.02 L3.72 18.28 L3.98 13.91 L0.70 11.00 L3.98 8.09 L3.72 3.72 L8.09 3.98 Z" fill="#fff" stroke="#fff" stroke-width="1.2" stroke-linejoin="round"/><circle cx="11" cy="11" r="2.6" fill="#1c2b3c"/></svg>
<div style="position:absolute;left:1357px;top:627.46px;width:36px;height:37.5px;background:#cb1f2b;border-radius:2px"></div>
<svg style="position:absolute;left:1365px;top:635.76px" width="20" height="22" viewBox="0 0 20 22"><g fill="none" stroke="#fff" stroke-width="2.3" stroke-linejoin="round"><path d="M4 7 L16 7 L15 19.5 L5 19.5 Z"/><path d="M2 6.5 Q10 3 18 6.5"/><path d="M7.5 4.5 Q7.5 2 10 2 Q12.5 2 12.5 4.5"/></g><g fill="#fff"><rect x="7.5" y="10" width="5" height="2"/><rect x="7.5" y="14.5" width="5" height="2"/></g></svg>
<div style="position:absolute;left:54px;top:673.58px;width:1209.5px;height:37.3px;border:1px solid #dedede;border-bottom:2px solid #e2e2e2;border-left:none;border-radius:0 3px 3px 0;box-sizing:border-box;background:#fff;box-shadow:0 1px 1px rgba(0,0,0,0.05)"></div>
<div style="position:absolute;left:44.5px;top:674.08px;width:9.5px;height:36.5px;background:#4a8a52;border-radius:3px"></div>
<svg style="position:absolute;left:66px;top:689.28px" width="9" height="10" viewBox="0 0 9 10"><path d="M0 0 L9 5 L0 10 Z" fill="#707070"/></svg>
<svg style="position:absolute;left:82px;top:683.28px" width="20" height="20" viewBox="0 0 20 20"><circle cx="10" cy="10" r="9.5" fill="#8c8c8c"/><path d="M2.5 8.5 Q4 4.5 9.5 3.5 Q9 6 6 8 Q4.5 9.5 2.5 8.5 Z" fill="#f2f2f2"/><ellipse cx="15.2" cy="9.8" rx="1.6" ry="2.2" fill="#f4f4f4"/><path d="M5 15.5 Q8 12.5 11 15.5 Q8.5 18 5 15.5 Z" fill="#fff"/></svg>
<div style="position:absolute;left:108px;top:679.58px;width:16px;height:15.5px;background:rgb(214,214,214)"></div>
<div style="position:absolute;left:108px;top:695.08px;width:16px;height:15.5px;background:rgb(234,234,234)"></div>
<div style="position:absolute;left:124px;top:679.58px;width:16px;height:15.5px;background:rgb(226,226,226)"></div>
<div style="position:absolute;left:124px;top:695.08px;width:16px;height:15.5px;background:rgb(230,230,230)"></div>
<div style="position:absolute;left:140px;top:679.58px;width:16px;height:15.5px;background:rgb(226,226,226)"></div>
<div style="position:absolute;left:140px;top:695.08px;width:16px;height:15.5px;background:rgb(234,234,234)"></div>
<div style="position:absolute;left:108px;top:710.58px;width:48px;height:9.6px;background:#f4f4f4"></div>
<svg style="position:absolute;left:921.5px;top:683.58px" width="17.5" height="18.5" viewBox="0 0 18 19"><rect width="18" height="19" rx="3" fill="#3f7de8"/><ellipse cx="10.3" cy="6.3" rx="3.3" ry="3" fill="#dbe7fc"/><path d="M8.5 8 L11 8.5 L9.5 10.5 L7.5 10 Z" fill="#c9daf9"/><ellipse cx="8.6" cy="13.4" rx="4.6" ry="3.2" fill="#d2e1fb"/></svg>
<div style="position:absolute;left:1270px;top:673.58px;width:37.5px;height:37.5px;background:#2b9be2;border-radius:2px"></div>
<svg style="position:absolute;left:1278px;top:683.38px" width="22" height="20" viewBox="0 0 22 20"><g fill="#fff"><rect x="0.3" y="12" width="5" height="7" rx="2"/><rect x="8" y="6" width="5" height="13" rx="1"/><rect x="15.5" y="0" width="5.5" height="19" rx="1"/></g></svg>
<div style="position:absolute;left:1314px;top:673.58px;width:37.5px;height:37.5px;background:#3c4e62;border-radius:2px;box-shadow:inset 0 0 0 1.5px #23354a"></div>
<svg style="position:absolute;left:1321px;top:681.88px" width="22" height="22" viewBox="0 0 22 22"><path d="M11.00 0.70 L13.91 3.98 L18.28 3.72 L18.02 8.09 L21.30 11.00 L18.02 13.91 L18.28 18.28 L13.91 18.02 L11.00 21.30 L8.09 18.02 L3.72 18.28 L3.98 13.91 L0.70 11.00 L3.98 8.09 L3.72 3.72 L8.09 3.98 Z" fill="#fff" stroke="#fff" stroke-width="1.2" stroke-linejoin="round"/><circle cx="11" cy="11" r="2.6" fill="#1c2b3c"/></svg>
<div style="position:absolute;left:1357px;top:673.58px;width:36px;height:37.5px;background:#cb1f2b;border-radius:2px"></div>
<svg style="position:absolute;left:1365px;top:681.88px" width="20" height="22" viewBox="0 0 20 22"><g fill="none" stroke="#fff" stroke-width="2.3" stroke-linejoin="round"><path d="M4 7 L16 7 L15 19.5 L5 19.5 Z"/><path d="M2 6.5 Q10 3 18 6.5"/><path d="M7.5 4.5 Q7.5 2 10 2 Q12.5 2 12.5 4.5"/></g><g fill="#fff"><rect x="7.5" y="10" width="5" height="2"/><rect x="7.5" y="14.5" width="5" height="2"/></g></svg>
<div style="position:absolute;left:54px;top:719.70px;width:1209.5px;height:37.3px;border:1px solid #dedede;border-bottom:2px solid #e2e2e2;border-left:none;border-radius:0 3px 3px 0;box-sizing:border-box;background:#fff;box-shadow:0 1px 1px rgba(0,0,0,0.05)"></div>
<div style="position:absolute;left:44.5px;top:720.20px;width:9.5px;height:36.5px;background:#2f5cf0;border-radius:3px"></div>
<svg style="position:absolute;left:66px;top:735.40px" width="9" height="10" viewBox="0 0 9 10"><path d="M0 0 L9 5 L0 10 Z" fill="#707070"/></svg>
<svg style="position:absolute;left:82px;top:729.40px" width="20" height="20" viewBox="0 0 20 20"><circle cx="10" cy="10" r="9.5" fill="#8c8c8c"/><path d="M2.5 8.5 Q4 4.5 9.5 3.5 Q9 6 6 8 Q4.5 9.5 2.5 8.5 Z" fill="#f2f2f2"/><ellipse cx="15.2" cy="9.8" rx="1.6" ry="2.2" fill="#f4f4f4"/><path d="M5 15.5 Q8 12.5 11 15.5 Q8.5 18 5 15.5 Z" fill="#fff"/></svg>
<div style="position:absolute;left:108px;top:725.70px;width:16px;height:15.5px;background:rgb(222,222,222)"></div>
<div style="position:absolute;left:108px;top:741.20px;width:16px;height:15.5px;background:rgb(226,226,226)"></div>
<div style="position:absolute;left:124px;top:725.70px;width:16px;height:15.5px;background:rgb(230,230,230)"></div>
<div style="position:absolute;left:124px;top:741.20px;width:16px;height:15.5px;background:rgb(238,238,238)"></div>
<div style="position:absolute;left:140px;top:725.70px;width:16px;height:15.5px;background:rgb(230,230,230)"></div>
<div style="position:absolute;left:140px;top:741.20px;width:16px;height:15.5px;background:rgb(230,230,230)"></div>
<div style="position:absolute;left:108px;top:756.70px;width:48px;height:9.6px;background:#f4f4f4"></div>
<svg style="position:absolute;left:585.5px;top:735.70px" width="9" height="10" viewBox="0 0 9 10"><path d="M4.5 0 L9 10 L0 10 Z" fill="#229a22"/></svg>
<svg style="position:absolute;left:921.5px;top:729.70px" width="17.5" height="18.5" viewBox="0 0 18 19"><rect width="18" height="19" rx="3" fill="#3f7de8"/><ellipse cx="10.3" cy="6.3" rx="3.3" ry="3" fill="#dbe7fc"/><path d="M8.5 8 L11 8.5 L9.5 10.5 L7.5 10 Z" fill="#c9daf9"/><ellipse cx="8.6" cy="13.4" rx="4.6" ry="3.2" fill="#d2e1fb"/></svg>
<div style="position:absolute;left:1270px;top:719.70px;width:37.5px;height:37.5px;background:#2b9be2;border-radius:2px"></div>
<svg style="position:absolute;left:1278px;top:729.50px" width="22" height="20" viewBox="0 0 22 20"><g fill="#fff"><rect x="0.3" y="12" width="5" height="7" rx="2"/><rect x="8" y="6" width="5" height="13" rx="1"/><rect x="15.5" y="0" width="5.5" height="19" rx="1"/></g></svg>
<div style="position:absolute;left:1314px;top:719.70px;width:37.5px;height:37.5px;background:#3c4e62;border-radius:2px;box-shadow:inset 0 0 0 1.5px #23354a"></div>
<svg style="position:absolute;left:1321px;top:728.00px" width="22" height="22" viewBox="0 0 22 22"><path d="M11.00 0.70 L13.91 3.98 L18.28 3.72 L18.02 8.09 L21.30 11.00 L18.02 13.91 L18.28 18.28 L13.91 18.02 L11.00 21.30 L8.09 18.02 L3.72 18.28 L3.98 13.91 L0.70 11.00 L3.98 8.09 L3.72 3.72 L8.09 3.98 Z" fill="#fff" stroke="#fff" stroke-width="1.2" stroke-linejoin="round"/><circle cx="11" cy="11" r="2.6" fill="#1c2b3c"/></svg>
<div style="position:absolute;left:1357px;top:719.70px;width:36px;height:37.5px;background:#cb1f2b;border-radius:2px"></div>
<svg style="position:absolute;left:1365px;top:728.00px" width="20" height="22" viewBox="0 0 20 22"><g fill="none" stroke="#fff" stroke-width="2.3" stroke-linejoin="round"><path d="M4 7 L16 7 L15 19.5 L5 19.5 Z"/><path d="M2 6.5 Q10 3 18 6.5"/><path d="M7.5 4.5 Q7.5 2 10 2 Q12.5 2 12.5 4.5"/></g><g fill="#fff"><rect x="7.5" y="10" width="5" height="2"/><rect x="7.5" y="14.5" width="5" height="2"/></g></svg>
<div style="position:absolute;left:54px;top:765.82px;width:1209.5px;height:37.3px;border:1px solid #dedede;border-bottom:2px solid #e2e2e2;border-left:none;border-radius:0 3px 3px 0;box-sizing:border-box;background:#fff;box-shadow:0 1px 1px rgba(0,0,0,0.05)"></div>
<div style="position:absolute;left:44.5px;top:766.32px;width:9.5px;height:36.5px;background:#a0203f;border-radius:3px"></div>
<svg style="position:absolute;left:66px;top:781.52px" width="9" height="10" viewBox="0 0 9 10"><path d="M0 0 L9 5 L0 10 Z" fill="#707070"/></svg>
<svg style="position:absolute;left:82px;top:775.52px" width="20" height="20" viewBox="0 0 20 20"><circle cx="10" cy="10" r="9.5" fill="#8c8c8c"/><path d="M2.5 8.5 Q4 4.5 9.5 3.5 Q9 6 6 8 Q4.5 9.5 2.5 8.5 Z" fill="#f2f2f2"/><ellipse cx="15.2" cy="9.8" rx="1.6" ry="2.2" fill="#f4f4f4"/><path d="M5 15.5 Q8 12.5 11 15.5 Q8.5 18 5 15.5 Z" fill="#fff"/></svg>
<div style="position:absolute;left:108px;top:771.82px;width:16px;height:15.5px;background:rgb(222,222,222)"></div>
<div style="position:absolute;left:108px;top:787.32px;width:16px;height:15.5px;background:rgb(238,238,238)"></div>
<div style="position:absolute;left:124px;top:771.82px;width:16px;height:15.5px;background:rgb(230,230,230)"></div>
<div style="position:absolute;left:124px;top:787.32px;width:16px;height:15.5px;background:rgb(238,238,238)"></div>
<div style="position:absolute;left:140px;top:771.82px;width:16px;height:15.5px;background:rgb(222,222,222)"></div>
<div style="position:absolute;left:140px;top:787.32px;width:16px;height:15.5px;background:rgb(234,234,234)"></div>
<div style="position:absolute;left:108px;top:802.82px;width:48px;height:9.6px;background:#f4f4f4"></div>
<svg style="position:absolute;left:921.5px;top:775.82px" width="17.5" height="18.5" viewBox="0 0 18 19"><rect width="18" height="19" rx="3" fill="#3f7de8"/><ellipse cx="10.3" cy="6.3" rx="3.3" ry="3" fill="#dbe7fc"/><path d="M8.5 8 L11 8.5 L9.5 10.5 L7.5 10 Z" fill="#c9daf9"/><ellipse cx="8.6" cy="13.4" rx="4.6" ry="3.2" fill="#d2e1fb"/></svg>
<div style="position:absolute;left:1270px;top:765.82px;width:37.5px;height:37.5px;background:#2b9be2;border-radius:2px"></div>
<svg style="position:absolute;left:1278px;top:775.62px" width="22" height="20" viewBox="0 0 22 20"><g fill="#fff"><rect x="0.3" y="12" width="5" height="7" rx="2"/><rect x="8" y="6" width="5" height="13" rx="1"/><rect x="15.5" y="0" width="5.5" height="19" rx="1"/></g></svg>
<div style="position:absolute;left:1314px;top:765.82px;width:37.5px;height:37.5px;background:#3c4e62;border-radius:2px;box-shadow:inset 0 0 0 1.5px #23354a"></div>
<svg style="position:absolute;left:1321px;top:774.12px" width="22" height="22" viewBox="0 0 22 22"><path d="M11.00 0.70 L13.91 3.98 L18.28 3.72 L18.02 8.09 L21.30 11.00 L18.02 13.91 L18.28 18.28 L13.91 18.02 L11.00 21.30 L8.09 18.02 L3.72 18.28 L3.98 13.91 L0.70 11.00 L3.98 8.09 L3.72 3.72 L8.09 3.98 Z" fill="#fff" stroke="#fff" stroke-width="1.2" stroke-linejoin="round"/><circle cx="11" cy="11" r="2.6" fill="#1c2b3c"/></svg>
<div style="position:absolute;left:1357px;top:765.82px;width:36px;height:37.5px;background:#cb1f2b;border-radius:2px"></div>
<svg style="position:absolute;left:1365px;top:774.12px" width="20" height="22" viewBox="0 0 20 22"><g fill="none" stroke="#fff" stroke-width="2.3" stroke-linejoin="round"><path d="M4 7 L16 7 L15 19.5 L5 19.5 Z"/><path d="M2 6.5 Q10 3 18 6.5"/><path d="M7.5 4.5 Q7.5 2 10 2 Q12.5 2 12.5 4.5"/></g><g fill="#fff"><rect x="7.5" y="10" width="5" height="2"/><rect x="7.5" y="14.5" width="5" height="2"/></g></svg>
<div style="position:absolute;left:54px;top:811.94px;width:1209.5px;height:37.3px;border:1px solid #dedede;border-bottom:2px solid #e2e2e2;border-left:none;border-radius:0 3px 3px 0;box-sizing:border-box;background:#fff;box-shadow:0 1px 1px rgba(0,0,0,0.05)"></div>
<div style="position:absolute;left:44.5px;top:812.44px;width:9.5px;height:36.5px;background:#db6fc0;border-radius:3px"></div>
<svg style="position:absolute;left:66px;top:827.64px" width="9" height="10" viewBox="0 0 9 10"><path d="M0 0 L9 5 L0 10 Z" fill="#707070"/></svg>
<svg style="position:absolute;left:82px;top:821.64px" width="20" height="20" viewBox="0 0 20 20"><circle cx="10" cy="10" r="9.5" fill="#8c8c8c"/><path d="M2.5 8.5 Q4 4.5 9.5 3.5 Q9 6 6 8 Q4.5 9.5 2.5 8.5 Z" fill="#f2f2f2"/><ellipse cx="15.2" cy="9.8" rx="1.6" ry="2.2" fill="#f4f4f4"/><path d="M5 15.5 Q8 12.5 11 15.5 Q8.5 18 5 15.5 Z" fill="#fff"/></svg>
<div style="position:absolute;left:108px;top:817.94px;width:16px;height:15.5px;background:rgb(218,218,218)"></div>
<div style="position:absolute;left:108px;top:833.44px;width:16px;height:15.5px;background:rgb(230,230,230)"></div>
<div style="position:absolute;left:124px;top:817.94px;width:16px;height:15.5px;background:rgb(230,230,230)"></div>
<div style="position:absolute;left:124px;top:833.44px;width:16px;height:15.5px;background:rgb(226,226,226)"></div>
<div style="position:absolute;left:140px;top:817.94px;width:16px;height:15.5px;background:rgb(222,222,222)"></div>
<div style="position:absolute;left:140px;top:833.44px;width:16px;height:15.5px;background:rgb(234,234,234)"></div>
<div style="position:absolute;left:108px;top:848.94px;width:48px;height:9.6px;background:#f4f4f4"></div>
<svg style="position:absolute;left:585.5px;top:829.44px" width="9" height="9" viewBox="0 0 9 9"><path d="M0 0 L9 0 L4.5 9 Z" fill="#d42a38"/></svg>
<svg style="position:absolute;left:921.5px;top:821.94px" width="17.5" height="18.5" viewBox="0 0 18 19"><rect width="18" height="19" rx="3" fill="#3f7de8"/><ellipse cx="10.3" cy="6.3" rx="3.3" ry="3" fill="#dbe7fc"/><path d="M8.5 8 L11 8.5 L9.5 10.5 L7.5 10 Z" fill="#c9daf9"/><ellipse cx="8.6" cy="13.4" rx="4.6" ry="3.2" fill="#d2e1fb"/></svg>
<div style="position:absolute;left:1270px;top:811.94px;width:37.5px;height:37.5px;background:#2b9be2;border-radius:2px"></div>
<svg style="position:absolute;left:1278px;top:821.74px" width="22" height="20" viewBox="0 0 22 20"><g fill="#fff"><rect x="0.3" y="12" width="5" height="7" rx="2"/><rect x="8" y="6" width="5" height="13" rx="1"/><rect x="15.5" y="0" width="5.5" height="19" rx="1"/></g></svg>
<div style="position:absolute;left:1314px;top:811.94px;width:37.5px;height:37.5px;background:#3c4e62;border-radius:2px;box-shadow:inset 0 0 0 1.5px #23354a"></div>
<svg style="position:absolute;left:1321px;top:820.24px" width="22" height="22" viewBox="0 0 22 22"><path d="M11.00 0.70 L13.91 3.98 L18.28 3.72 L18.02 8.09 L21.30 11.00 L18.02 13.91 L18.28 18.28 L13.91 18.02 L11.00 21.30 L8.09 18.02 L3.72 18.28 L3.98 13.91 L0.70 11.00 L3.98 8.09 L3.72 3.72 L8.09 3.98 Z" fill="#fff" stroke="#fff" stroke-width="1.2" stroke-linejoin="round"/><circle cx="11" cy="11" r="2.6" fill="#1c2b3c"/></svg>
<div style="position:absolute;left:1357px;top:811.94px;width:36px;height:37.5px;background:#cb1f2b;border-radius:2px"></div>
<svg style="position:absolute;left:1365px;top:820.24px" width="20" height="22" viewBox="0 0 20 22"><g fill="none" stroke="#fff" stroke-width="2.3" stroke-linejoin="round"><path d="M4 7 L16 7 L15 19.5 L5 19.5 Z"/><path d="M2 6.5 Q10 3 18 6.5"/><path d="M7.5 4.5 Q7.5 2 10 2 Q12.5 2 12.5 4.5"/></g><g fill="#fff"><rect x="7.5" y="10" width="5" height="2"/><rect x="7.5" y="14.5" width="5" height="2"/></g></svg>
<div style="position:absolute;left:54px;top:858.06px;width:1209.5px;height:37.3px;border:1px solid #dedede;border-bottom:2px solid #e2e2e2;border-left:none;border-radius:0 3px 3px 0;box-sizing:border-box;background:#fff;box-shadow:0 1px 1px rgba(0,0,0,0.05)"></div>
<div style="position:absolute;left:44.5px;top:858.56px;width:9.5px;height:36.5px;background:#7ee02a;border-radius:3px"></div>
<svg style="position:absolute;left:66px;top:873.76px" width="9" height="10" viewBox="0 0 9 10"><path d="M0 0 L9 5 L0 10 Z" fill="#707070"/></svg>
<svg style="position:absolute;left:82px;top:867.76px" width="20" height="20" viewBox="0 0 20 20"><circle cx="10" cy="10" r="9.5" fill="#8c8c8c"/><path d="M2.5 8.5 Q4 4.5 9.5 3.5 Q9 6 6 8 Q4.5 9.5 2.5 8.5 Z" fill="#f2f2f2"/><ellipse cx="15.2" cy="9.8" rx="1.6" ry="2.2" fill="#f4f4f4"/><path d="M5 15.5 Q8 12.5 11 15.5 Q8.5 18 5 15.5 Z" fill="#fff"/></svg>
<div style="position:absolute;left:108px;top:864.06px;width:16px;height:15.5px;background:rgb(230,230,230)"></div>
<div style="position:absolute;left:108px;top:879.56px;width:16px;height:15.5px;background:rgb(230,230,230)"></div>
<div style="position:absolute;left:124px;top:864.06px;width:16px;height:15.5px;background:rgb(214,214,214)"></div>
<div style="position:absolute;left:124px;top:879.56px;width:16px;height:15.5px;background:rgb(234,234,234)"></div>
<div style="position:absolute;left:140px;top:864.06px;width:16px;height:15.5px;background:rgb(222,222,222)"></div>
<div style="position:absolute;left:140px;top:879.56px;width:16px;height:15.5px;background:rgb(238,238,238)"></div>
<div style="position:absolute;left:108px;top:895.06px;width:48px;height:9.6px;background:#f4f4f4"></div>
<svg style="position:absolute;left:921.5px;top:868.06px" width="17.5" height="18.5" viewBox="0 0 18 19"><rect width="18" height="19" rx="3" fill="#3f7de8"/><ellipse cx="10.3" cy="6.3" rx="3.3" ry="3" fill="#dbe7fc"/><path d="M8.5 8 L11 8.5 L9.5 10.5 L7.5 10 Z" fill="#c9daf9"/><ellipse cx="8.6" cy="13.4" rx="4.6" ry="3.2" fill="#d2e1fb"/></svg>
<div style="position:absolute;left:1270px;top:858.06px;width:37.5px;height:37.5px;background:#2b9be2;border-radius:2px"></div>
<svg style="position:absolute;left:1278px;top:867.86px" width="22" height="20" viewBox="0 0 22 20"><g fill="#fff"><rect x="0.3" y="12" width="5" height="7" rx="2"/><rect x="8" y="6" width="5" height="13" rx="1"/><rect x="15.5" y="0" width="5.5" height="19" rx="1"/></g></svg>
<div style="position:absolute;left:1314px;top:858.06px;width:37.5px;height:37.5px;background:#3c4e62;border-radius:2px;box-shadow:inset 0 0 0 1.5px #23354a"></div>
<svg style="position:absolute;left:1321px;top:866.36px" width="22" height="22" viewBox="0 0 22 22"><path d="M11.00 0.70 L13.91 3.98 L18.28 3.72 L18.02 8.09 L21.30 11.00 L18.02 13.91 L18.28 18.28 L13.91 18.02 L11.00 21.30 L8.09 18.02 L3.72 18.28 L3.98 13.91 L0.70 11.00 L3.98 8.09 L3.72 3.72 L8.09 3.98 Z" fill="#fff" stroke="#fff" stroke-width="1.2" stroke-linejoin="round"/><circle cx="11" cy="11" r="2.6" fill="#1c2b3c"/></svg>
<div style="position:absolute;left:1357px;top:858.06px;width:36px;height:37.5px;background:#cb1f2b;border-radius:2px"></div>
<svg style="position:absolute;left:1365px;top:866.36px" width="20" height="22" viewBox="0 0 20 22"><g fill="none" stroke="#fff" stroke-width="2.3" stroke-linejoin="round"><path d="M4 7 L16 7 L15 19.5 L5 19.5 Z"/><path d="M2 6.5 Q10 3 18 6.5"/><path d="M7.5 4.5 Q7.5 2 10 2 Q12.5 2 12.5 4.5"/></g><g fill="#fff"><rect x="7.5" y="10" width="5" height="2"/><rect x="7.5" y="14.5" width="5" height="2"/></g></svg>
<div style="position:absolute;left:38px;top:32.45px;font-size:22.5px;line-height:22.5px;font-weight:700;color:#fff;white-space:nowrap;transform:scaleX(0.8428);transform-origin:0 0;-webkit-text-stroke:0.3px #fff;">Личный кабинет</div>
<div style="position:absolute;left:46px;top:97.61px;font-size:17px;line-height:17px;font-weight:700;color:#fff;white-space:nowrap;transform:scaleX(0.9943);transform-origin:0 0;-webkit-text-stroke:0.3px #fff;">Обзор</div>
<div style="position:absolute;left:172px;top:97.61px;font-size:17px;line-height:17px;font-weight:700;color:#fff;white-space:nowrap;transform:scaleX(0.9621);transform-origin:0 0;-webkit-text-stroke:0.3px #fff;">Проекты</div>
<div style="position:absolute;left:330px;top:97.61px;font-size:17px;line-height:17px;font-weight:700;color:#fff;white-space:nowrap;transform:scaleX(0.9449);transform-origin:0 0;-webkit-text-stroke:0.3px #fff;">Отчеты</div>
<div style="position:absolute;left:464px;top:97.61px;font-size:17px;line-height:17px;font-weight:700;color:#fff;white-space:nowrap;transform:scaleX(0.9591);transform-origin:0 0;-webkit-text-stroke:0.3px #fff;">Аккаунты</div>
<div style="position:absolute;left:616px;top:97.61px;font-size:17px;line-height:17px;font-weight:700;color:#fff;white-space:nowrap;transform:scaleX(0.9581);transform-origin:0 0;-webkit-text-stroke:0.3px #fff;">Инструменты</div>
<div style="position:absolute;left:1115px;top:37.61px;font-size:17px;line-height:17px;font-weight:700;color:#fff;white-space:nowrap;transform:scaleX(0.9796);transform-origin:0 0;-webkit-text-stroke:0.3px #fff;">$350.16298</div>
<div style="position:absolute;left:1326px;top:38.61px;font-size:17px;line-height:17px;font-weight:700;color:#fff;white-space:nowrap;transform:scaleX(0.9740);transform-origin:0 0;-webkit-text-stroke:0.3px #fff;">goodday</div>
<div style="position:absolute;left:1287px;top:98.88px;font-size:15.5px;line-height:15.5px;font-weight:400;color:#78abe0;white-space:nowrap;transform:scaleX(1.0568);transform-origin:0 0;-webkit-text-stroke:0.1px #78abe0;">Добавить проект</div>
<div style="position:absolute;left:44px;top:176.76px;font-size:18px;line-height:18px;font-weight:400;color:#2f2f2f;white-space:nowrap;transform:scaleX(1.0390);transform-origin:0 0;">САЙТЫ</div>
<div style="position:absolute;left:1165px;top:182.30px;font-size:15px;line-height:15px;font-weight:400;color:#cfcfcf;white-space:nowrap;transform:scaleX(1.1545);transform-origin:0 0;">Поиск</div>
<div style="position:absolute;left:73px;top:225.03px;font-size:16.5px;line-height:16.5px;font-weight:400;color:#c9c9c9;white-space:nowrap;transform:scaleX(0.9900);transform-origin:0 0;">Название</div>
<div style="position:absolute;left:272px;top:225.03px;font-size:16.5px;line-height:16.5px;font-weight:400;color:#c9c9c9;white-space:nowrap;transform:scaleX(1.0520);transform-origin:0 0;">Топ-5/10/30</div>
<div style="position:absolute;left:445px;top:225.03px;font-size:16.5px;line-height:16.5px;font-weight:400;color:#c9c9c9;white-space:nowrap;transform:scaleX(1.0068);transform-origin:0 0;">Запросы</div>
<div style="position:absolute;left:555px;top:225.03px;font-size:16.5px;line-height:16.5px;font-weight:400;color:#c9c9c9;white-space:nowrap;transform:scaleX(1.0262);transform-origin:0 0;">Ср. позиция</div>
<div style="position:absolute;left:716px;top:225.03px;font-size:16.5px;line-height:16.5px;font-weight:400;color:#c9c9c9;white-space:nowrap;transform:scaleX(1.0143);transform-origin:0 0;">т/з</div>
<div style="position:absolute;left:818px;top:225.03px;font-size:16.5px;line-height:16.5px;font-weight:400;color:#c9c9c9;white-space:nowrap;transform:scaleX(0.9336);transform-origin:0 0;">ИКС</div>
<div style="position:absolute;left:922px;top:225.03px;font-size:16.5px;line-height:16.5px;font-weight:400;color:#c9c9c9;white-space:nowrap;transform:scaleX(0.9799);transform-origin:0 0;">В индексе</div>
<div style="position:absolute;left:1112px;top:225.03px;font-size:16.5px;line-height:16.5px;font-weight:400;color:#c9c9c9;white-space:nowrap;transform:scaleX(1.0377);transform-origin:0 0;">Дата проверки</div>
<div style="position:absolute;left:156px;top:269.84px;font-size:18.5px;line-height:18.5px;font-weight:400;color:#4a4a4a;white-space:nowrap;transform:scaleX(0.92);transform-origin:0 0;">.by</div>
<div style="position:absolute;left:272px;top:268.22px;font-size:19px;line-height:19px;font-weight:400;color:#303030;white-space:nowrap;transform:scaleX(0.92);transform-origin:0 0;">33/31/58</div>
<div style="position:absolute;left:447px;top:268.22px;font-size:19px;line-height:19px;font-weight:400;color:#303030;white-space:nowrap;transform:scaleX(0.92);transform-origin:0 0;">129</div>
<div style="position:absolute;left:555px;top:268.22px;font-size:19px;line-height:19px;font-weight:400;color:#303030;white-space:nowrap;transform:scaleX(0.92);transform-origin:0 0;">52</div>
<div style="position:absolute;left:600px;top:268.64px;font-size:18.5px;line-height:18.5px;font-weight:400;color:#2f9a35;white-space:nowrap;transform:scaleX(0.92);transform-origin:0 0;">3</div>
<div style="position:absolute;left:715px;top:268.22px;font-size:19px;line-height:19px;font-weight:400;color:#303030;white-space:nowrap;transform:scaleX(0.92);transform-origin:0 0;"><span style="color:#6c9e34">107</span><span style="color:#555">/</span><span style="color:#c42f3d">58</span></div>
<div style="position:absolute;left:827px;top:268.22px;font-size:19px;line-height:19px;font-weight:400;color:#303030;white-space:nowrap;transform:scaleX(0.92);transform-origin:0 0;">90</div>
<div style="position:absolute;left:947px;top:268.22px;font-size:19px;line-height:19px;font-weight:400;color:#303030;white-space:nowrap;transform:scaleX(0.92);transform-origin:0 0;">423</div>
<div style="position:absolute;left:1004px;top:268.29px;font-size:19.5px;line-height:19.5px;font-weight:700;color:#dc2a30;white-space:nowrap;transform:scaleX(0.82);transform-origin:0 0;">Я</div>
<div style="position:absolute;left:1021px;top:268.22px;font-size:19px;line-height:19px;font-weight:400;color:#303030;white-space:nowrap;transform:scaleX(0.92);transform-origin:0 0;">459</div>
<div style="position:absolute;left:1128.5px;top:269.06px;font-size:18px;line-height:18px;font-weight:400;color:#8f8f8f;white-space:nowrap;transform:scaleX(0.93);transform-origin:0 0;">31 окт. 2017</div>
<div style="position:absolute;left:272px;top:314.34px;font-size:19px;line-height:19px;font-weight:400;color:#303030;white-space:nowrap;transform:scaleX(0.92);transform-origin:0 0;">4/16/48</div>
<div style="position:absolute;left:447px;top:314.34px;font-size:19px;line-height:19px;font-weight:400;color:#303030;white-space:nowrap;transform:scaleX(0.92);transform-origin:0 0;">53</div>
<div style="position:absolute;left:555px;top:314.34px;font-size:19px;line-height:19px;font-weight:400;color:#303030;white-space:nowrap;transform:scaleX(0.92);transform-origin:0 0;">31</div>
<div style="position:absolute;left:600px;top:314.76px;font-size:18.5px;line-height:18.5px;font-weight:400;color:#2f9a35;white-space:nowrap;transform:scaleX(0.92);transform-origin:0 0;">5</div>
<div style="position:absolute;left:715px;top:314.34px;font-size:19px;line-height:19px;font-weight:400;color:#303030;white-space:nowrap;transform:scaleX(0.92);transform-origin:0 0;"><span style="color:#6c9e34">62</span><span style="color:#555">/</span><span style="color:#c42f3d">24</span></div>
<div style="position:absolute;left:827px;top:314.34px;font-size:19px;line-height:19px;font-weight:400;color:#303030;white-space:nowrap;transform:scaleX(0.92);transform-origin:0 0;">20</div>
<div style="position:absolute;left:947px;top:314.34px;font-size:19px;line-height:19px;font-weight:400;color:#303030;white-space:nowrap;transform:scaleX(0.92);transform-origin:0 0;">173</div>
<div style="position:absolute;left:1004px;top:314.41px;font-size:19.5px;line-height:19.5px;font-weight:700;color:#dc2a30;white-space:nowrap;transform:scaleX(0.82);transform-origin:0 0;">Я</div>
<div style="position:absolute;left:1021px;top:314.34px;font-size:19px;line-height:19px;font-weight:400;color:#303030;white-space:nowrap;transform:scaleX(0.92);transform-origin:0 0;">199</div>
<div style="position:absolute;left:1128.5px;top:315.18px;font-size:18px;line-height:18px;font-weight:400;color:#8f8f8f;white-space:nowrap;transform:scaleX(0.93);transform-origin:0 0;">23 дек. 2018</div>
<div style="position:absolute;left:156px;top:362.08px;font-size:18.5px;line-height:18.5px;font-weight:400;color:#4a4a4a;white-space:nowrap;transform:scaleX(0.92);transform-origin:0 0;">л.бел</div>
<div style="position:absolute;left:272px;top:360.46px;font-size:19px;line-height:19px;font-weight:400;color:#303030;white-space:nowrap;transform:scaleX(0.92);transform-origin:0 0;">384/170/113</div>
<div style="position:absolute;left:447px;top:360.46px;font-size:19px;line-height:19px;font-weight:400;color:#303030;white-space:nowrap;transform:scaleX(0.92);transform-origin:0 0;">394</div>
<div style="position:absolute;left:555px;top:360.46px;font-size:19px;line-height:19px;font-weight:400;color:#303030;white-space:nowrap;transform:scaleX(0.92);transform-origin:0 0;">17</div>
<div style="position:absolute;left:600px;top:360.88px;font-size:18.5px;line-height:18.5px;font-weight:400;color:#2f9a35;white-space:nowrap;transform:scaleX(0.92);transform-origin:0 0;">1</div>
<div style="position:absolute;left:715px;top:360.46px;font-size:19px;line-height:19px;font-weight:400;color:#303030;white-space:nowrap;transform:scaleX(0.92);transform-origin:0 0;"><span style="color:#6c9e34">377</span><span style="color:#555">/</span><span style="color:#c42f3d">243</span></div>
<div style="position:absolute;left:827px;top:360.46px;font-size:19px;line-height:19px;font-weight:400;color:#303030;white-space:nowrap;transform:scaleX(0.92);transform-origin:0 0;">80</div>
<div style="position:absolute;left:947px;top:360.46px;font-size:19px;line-height:19px;font-weight:400;color:#303030;white-space:nowrap;transform:scaleX(0.92);transform-origin:0 0;">398</div>
<div style="position:absolute;left:1004px;top:360.53px;font-size:19.5px;line-height:19.5px;font-weight:700;color:#dc2a30;white-space:nowrap;transform:scaleX(0.82);transform-origin:0 0;">Я</div>
<div style="position:absolute;left:1021px;top:360.46px;font-size:19px;line-height:19px;font-weight:400;color:#303030;white-space:nowrap;transform:scaleX(0.92);transform-origin:0 0;">431</div>
<div style="position:absolute;left:1128.5px;top:361.30px;font-size:18px;line-height:18px;font-weight:400;color:#8f8f8f;white-space:nowrap;transform:scaleX(0.93);transform-origin:0 0;">16 ноя. 2018</div>
<div style="position:absolute;left:156px;top:408.20px;font-size:18.5px;line-height:18.5px;font-weight:400;color:#4a4a4a;white-space:nowrap;transform:scaleX(0.92);transform-origin:0 0;">nox.by</div>
<div style="position:absolute;left:272px;top:406.58px;font-size:19px;line-height:19px;font-weight:400;color:#303030;white-space:nowrap;transform:scaleX(0.92);transform-origin:0 0;">570/146/54</div>
<div style="position:absolute;left:447px;top:406.58px;font-size:19px;line-height:19px;font-weight:400;color:#303030;white-space:nowrap;transform:scaleX(0.92);transform-origin:0 0;">394</div>
<div style="position:absolute;left:555px;top:406.58px;font-size:19px;line-height:19px;font-weight:400;color:#303030;white-space:nowrap;transform:scaleX(0.92);transform-origin:0 0;">7</div>
<div style="position:absolute;left:715px;top:406.58px;font-size:19px;line-height:19px;font-weight:400;color:#303030;white-space:nowrap;transform:scaleX(0.92);transform-origin:0 0;"><span style="color:#6c9e34">241</span><span style="color:#555">/</span><span style="color:#c42f3d">135</span></div>
<div style="position:absolute;left:827px;top:406.58px;font-size:19px;line-height:19px;font-weight:400;color:#303030;white-space:nowrap;transform:scaleX(0.92);transform-origin:0 0;">20</div>
<div style="position:absolute;left:947px;top:406.58px;font-size:19px;line-height:19px;font-weight:400;color:#303030;white-space:nowrap;transform:scaleX(0.92);transform-origin:0 0;">253</div>
<div style="position:absolute;left:1004px;top:406.65px;font-size:19.5px;line-height:19.5px;font-weight:700;color:#dc2a30;white-space:nowrap;transform:scaleX(0.82);transform-origin:0 0;">Я</div>
<div style="position:absolute;left:1021px;top:406.58px;font-size:19px;line-height:19px;font-weight:400;color:#303030;white-space:nowrap;transform:scaleX(0.92);transform-origin:0 0;">235</div>
<div style="position:absolute;left:1128.5px;top:407.42px;font-size:18px;line-height:18px;font-weight:400;color:#8f8f8f;white-space:nowrap;transform:scaleX(0.93);transform-origin:0 0;">22 дек. 2018</div>
<div style="position:absolute;left:156px;top:454.32px;font-size:18.5px;line-height:18.5px;font-weight:400;color:#4a4a4a;white-space:nowrap;transform:scaleX(0.92);transform-origin:0 0;">by</div>
<div style="position:absolute;left:272px;top:452.70px;font-size:19px;line-height:19px;font-weight:400;color:#303030;white-space:nowrap;transform:scaleX(0.92);transform-origin:0 0;">25/102/132</div>
<div style="position:absolute;left:447px;top:452.70px;font-size:19px;line-height:19px;font-weight:400;color:#303030;white-space:nowrap;transform:scaleX(0.92);transform-origin:0 0;">147</div>
<div style="position:absolute;left:555px;top:452.70px;font-size:19px;line-height:19px;font-weight:400;color:#303030;white-space:nowrap;transform:scaleX(0.92);transform-origin:0 0;">17</div>
<div style="position:absolute;left:715px;top:452.70px;font-size:19px;line-height:19px;font-weight:400;color:#303030;white-space:nowrap;transform:scaleX(0.92);transform-origin:0 0;"><span style="color:#6c9e34">69</span><span style="color:#555">/</span><span style="color:#c42f3d">125</span></div>
<div style="position:absolute;left:827px;top:452.70px;font-size:19px;line-height:19px;font-weight:400;color:#303030;white-space:nowrap;transform:scaleX(0.92);transform-origin:0 0;">20</div>
<div style="position:absolute;left:947px;top:452.70px;font-size:19px;line-height:19px;font-weight:400;color:#303030;white-space:nowrap;transform:scaleX(0.92);transform-origin:0 0;">246</div>
<div style="position:absolute;left:1004px;top:452.77px;font-size:19.5px;line-height:19.5px;font-weight:700;color:#dc2a30;white-space:nowrap;transform:scaleX(0.82);transform-origin:0 0;">Я</div>
<div style="position:absolute;left:1021px;top:452.70px;font-size:19px;line-height:19px;font-weight:400;color:#303030;white-space:nowrap;transform:scaleX(0.92);transform-origin:0 0;">181</div>
<div style="position:absolute;left:1128.5px;top:453.54px;font-size:18px;line-height:18px;font-weight:400;color:#8f8f8f;white-space:nowrap;transform:scaleX(0.93);transform-origin:0 0;">24 дек. 2018</div>
<div style="position:absolute;left:156px;top:500.44px;font-size:18.5px;line-height:18.5px;font-weight:400;color:#4a4a4a;white-space:nowrap;transform:scaleX(0.92);transform-origin:0 0;">eel.ru</div>
<div style="position:absolute;left:272px;top:498.82px;font-size:19px;line-height:19px;font-weight:400;color:#303030;white-space:nowrap;transform:scaleX(0.92);transform-origin:0 0;">1919/568/166</div>
<div style="position:absolute;left:447px;top:498.82px;font-size:19px;line-height:19px;font-weight:400;color:#303030;white-space:nowrap;transform:scaleX(0.92);transform-origin:0 0;">520</div>
<div style="position:absolute;left:555px;top:498.82px;font-size:19px;line-height:19px;font-weight:400;color:#303030;white-space:nowrap;transform:scaleX(0.92);transform-origin:0 0;">17</div>
<div style="position:absolute;left:600px;top:499.24px;font-size:18.5px;line-height:18.5px;font-weight:400;color:#d42a38;white-space:nowrap;transform:scaleX(0.92);transform-origin:0 0;">1</div>
<div style="position:absolute;left:715px;top:498.82px;font-size:19px;line-height:19px;font-weight:400;color:#303030;white-space:nowrap;transform:scaleX(0.92);transform-origin:0 0;"><span style="color:#6c9e34">713</span><span style="color:#555">/</span><span style="color:#c42f3d">723</span></div>
<div style="position:absolute;left:827px;top:498.82px;font-size:19px;line-height:19px;font-weight:400;color:#303030;white-space:nowrap;transform:scaleX(0.92);transform-origin:0 0;">20</div>
<div style="position:absolute;left:947px;top:498.82px;font-size:19px;line-height:19px;font-weight:400;color:#303030;white-space:nowrap;transform:scaleX(0.92);transform-origin:0 0;">4.8K</div>
<div style="position:absolute;left:1004px;top:498.89px;font-size:19.5px;line-height:19.5px;font-weight:700;color:#dc2a30;white-space:nowrap;transform:scaleX(0.82);transform-origin:0 0;">Я</div>
<div style="position:absolute;left:1021px;top:498.82px;font-size:19px;line-height:19px;font-weight:400;color:#303030;white-space:nowrap;transform:scaleX(0.92);transform-origin:0 0;">206K</div>
<div style="position:absolute;left:1128.5px;top:499.66px;font-size:18px;line-height:18px;font-weight:400;color:#8f8f8f;white-space:nowrap;transform:scaleX(0.93);transform-origin:0 0;">23 дек. 2018</div>
<div style="position:absolute;left:156px;top:546.56px;font-size:18.5px;line-height:18.5px;font-weight:400;color:#4a4a4a;white-space:nowrap;transform:scaleX(0.92);transform-origin:0 0;">dx.by</div>
<div style="position:absolute;left:272px;top:544.94px;font-size:19px;line-height:19px;font-weight:400;color:#303030;white-space:nowrap;transform:scaleX(0.92);transform-origin:0 0;">5/4/9</div>
<div style="position:absolute;left:447px;top:544.94px;font-size:19px;line-height:19px;font-weight:400;color:#303030;white-space:nowrap;transform:scaleX(0.92);transform-origin:0 0;">89</div>
<div style="position:absolute;left:555px;top:544.94px;font-size:19px;line-height:19px;font-weight:400;color:#303030;white-space:nowrap;transform:scaleX(0.92);transform-origin:0 0;">76</div>
<div style="position:absolute;left:600px;top:545.36px;font-size:18.5px;line-height:18.5px;font-weight:400;color:#d42a38;white-space:nowrap;transform:scaleX(0.92);transform-origin:0 0;">1</div>
<div style="position:absolute;left:715px;top:544.94px;font-size:19px;line-height:19px;font-weight:400;color:#303030;white-space:nowrap;transform:scaleX(0.92);transform-origin:0 0;"><span style="color:#6c9e34">40</span><span style="color:#555">/</span><span style="color:#c42f3d">45</span></div>
<div style="position:absolute;left:830px;top:544.94px;font-size:19px;line-height:19px;font-weight:400;color:#303030;white-space:nowrap;transform:scaleX(0.92);transform-origin:0 0;">-</div>
<div style="position:absolute;left:947px;top:544.94px;font-size:19px;line-height:19px;font-weight:400;color:#303030;white-space:nowrap;transform:scaleX(0.92);transform-origin:0 0;">1.1K</div>
<div style="position:absolute;left:1004px;top:545.01px;font-size:19.5px;line-height:19.5px;font-weight:700;color:#dc2a30;white-space:nowrap;transform:scaleX(0.82);transform-origin:0 0;">Я</div>
<div style="position:absolute;left:1021px;top:544.94px;font-size:19px;line-height:19px;font-weight:400;color:#303030;white-space:nowrap;transform:scaleX(0.92);transform-origin:0 0;">699</div>
<div style="position:absolute;left:1128.5px;top:545.78px;font-size:18px;line-height:18px;font-weight:400;color:#8f8f8f;white-space:nowrap;transform:scaleX(0.93);transform-origin:0 0;">23 дек. 2018</div>
<div style="position:absolute;left:156px;top:592.68px;font-size:18.5px;line-height:18.5px;font-weight:400;color:#4a4a4a;white-space:nowrap;transform:scaleX(0.92);transform-origin:0 0;">tudy-lam...</div>
<div style="position:absolute;left:272px;top:591.06px;font-size:19px;line-height:19px;font-weight:400;color:#303030;white-space:nowrap;transform:scaleX(0.92);transform-origin:0 0;">185/63/69</div>
<div style="position:absolute;left:447px;top:591.06px;font-size:19px;line-height:19px;font-weight:400;color:#303030;white-space:nowrap;transform:scaleX(0.92);transform-origin:0 0;">175</div>
<div style="position:absolute;left:555px;top:591.06px;font-size:19px;line-height:19px;font-weight:400;color:#303030;white-space:nowrap;transform:scaleX(0.92);transform-origin:0 0;">14</div>
<div style="position:absolute;left:715px;top:591.06px;font-size:19px;line-height:19px;font-weight:400;color:#303030;white-space:nowrap;transform:scaleX(0.92);transform-origin:0 0;"><span style="color:#6c9e34">66</span><span style="color:#555">/</span><span style="color:#c42f3d">126</span></div>
<div style="position:absolute;left:827px;top:591.06px;font-size:19px;line-height:19px;font-weight:400;color:#303030;white-space:nowrap;transform:scaleX(0.92);transform-origin:0 0;">20</div>
<div style="position:absolute;left:947px;top:591.06px;font-size:19px;line-height:19px;font-weight:400;color:#303030;white-space:nowrap;transform:scaleX(0.92);transform-origin:0 0;">2.2K</div>
<div style="position:absolute;left:1004px;top:591.13px;font-size:19.5px;line-height:19.5px;font-weight:700;color:#dc2a30;white-space:nowrap;transform:scaleX(0.82);transform-origin:0 0;">Я</div>
<div style="position:absolute;left:1021px;top:591.06px;font-size:19px;line-height:19px;font-weight:400;color:#303030;white-space:nowrap;transform:scaleX(0.92);transform-origin:0 0;">2.2K</div>
<div style="position:absolute;left:1128.5px;top:591.90px;font-size:18px;line-height:18px;font-weight:400;color:#8f8f8f;white-space:nowrap;transform:scaleX(0.93);transform-origin:0 0;">21 дек. 2018</div>
<div style="position:absolute;left:156px;top:638.80px;font-size:18.5px;line-height:18.5px;font-weight:400;color:#4a4a4a;white-space:nowrap;transform:scaleX(0.92);transform-origin:0 0;">specstr...</div>
<div style="position:absolute;left:272px;top:637.18px;font-size:19px;line-height:19px;font-weight:400;color:#303030;white-space:nowrap;transform:scaleX(0.92);transform-origin:0 0;">139/47/61</div>
<div style="position:absolute;left:447px;top:637.18px;font-size:19px;line-height:19px;font-weight:400;color:#303030;white-space:nowrap;transform:scaleX(0.92);transform-origin:0 0;">152</div>
<div style="position:absolute;left:555px;top:637.18px;font-size:19px;line-height:19px;font-weight:400;color:#303030;white-space:nowrap;transform:scaleX(0.92);transform-origin:0 0;">19</div>
<div style="position:absolute;left:600px;top:637.60px;font-size:18.5px;line-height:18.5px;font-weight:400;color:#2f9a35;white-space:nowrap;transform:scaleX(0.92);transform-origin:0 0;">1</div>
<div style="position:absolute;left:715px;top:637.18px;font-size:19px;line-height:19px;font-weight:400;color:#303030;white-space:nowrap;transform:scaleX(0.92);transform-origin:0 0;"><span style="color:#6c9e34">100</span><span style="color:#555">/</span><span style="color:#c42f3d">48</span></div>
<div style="position:absolute;left:827px;top:637.18px;font-size:19px;line-height:19px;font-weight:400;color:#303030;white-space:nowrap;transform:scaleX(0.92);transform-origin:0 0;">20</div>
<div style="position:absolute;left:947px;top:637.18px;font-size:19px;line-height:19px;font-weight:400;color:#303030;white-space:nowrap;transform:scaleX(0.92);transform-origin:0 0;">89</div>
<div style="position:absolute;left:1004px;top:637.25px;font-size:19.5px;line-height:19.5px;font-weight:700;color:#dc2a30;white-space:nowrap;transform:scaleX(0.82);transform-origin:0 0;">Я</div>
<div style="position:absolute;left:1021px;top:637.18px;font-size:19px;line-height:19px;font-weight:400;color:#303030;white-space:nowrap;transform:scaleX(0.92);transform-origin:0 0;">81</div>
<div style="position:absolute;left:1128.5px;top:638.02px;font-size:18px;line-height:18px;font-weight:400;color:#8f8f8f;white-space:nowrap;transform:scaleX(0.93);transform-origin:0 0;">22 дек. 2018</div>
<div style="position:absolute;left:156px;top:684.92px;font-size:18.5px;line-height:18.5px;font-weight:400;color:#4a4a4a;white-space:nowrap;transform:scaleX(0.92);transform-origin:0 0;">al.by</div>
<div style="position:absolute;left:272px;top:683.30px;font-size:19px;line-height:19px;font-weight:400;color:#303030;white-space:nowrap;transform:scaleX(0.92);transform-origin:0 0;">140/98/74</div>
<div style="position:absolute;left:447px;top:683.30px;font-size:19px;line-height:19px;font-weight:400;color:#303030;white-space:nowrap;transform:scaleX(0.92);transform-origin:0 0;">173</div>
<div style="position:absolute;left:555px;top:683.30px;font-size:19px;line-height:19px;font-weight:400;color:#303030;white-space:nowrap;transform:scaleX(0.92);transform-origin:0 0;">13</div>
<div style="position:absolute;left:715px;top:683.30px;font-size:19px;line-height:19px;font-weight:400;color:#303030;white-space:nowrap;transform:scaleX(0.92);transform-origin:0 0;"><span style="color:#6c9e34">103</span><span style="color:#555">/</span><span style="color:#c42f3d">84</span></div>
<div style="position:absolute;left:830px;top:683.30px;font-size:19px;line-height:19px;font-weight:400;color:#303030;white-space:nowrap;transform:scaleX(0.92);transform-origin:0 0;">-</div>
<div style="position:absolute;left:947px;top:683.30px;font-size:19px;line-height:19px;font-weight:400;color:#303030;white-space:nowrap;transform:scaleX(0.92);transform-origin:0 0;">79</div>
<div style="position:absolute;left:1004px;top:683.37px;font-size:19.5px;line-height:19.5px;font-weight:700;color:#dc2a30;white-space:nowrap;transform:scaleX(0.82);transform-origin:0 0;">Я</div>
<div style="position:absolute;left:1021px;top:683.30px;font-size:19px;line-height:19px;font-weight:400;color:#303030;white-space:nowrap;transform:scaleX(0.92);transform-origin:0 0;">48</div>
<div style="position:absolute;left:1128.5px;top:684.14px;font-size:18px;line-height:18px;font-weight:400;color:#8f8f8f;white-space:nowrap;transform:scaleX(0.93);transform-origin:0 0;">22 дек. 2018</div>
<div style="position:absolute;left:156px;top:731.04px;font-size:18.5px;line-height:18.5px;font-weight:400;color:#4a4a4a;white-space:nowrap;transform:scaleX(0.92);transform-origin:0 0;">er.by</div>
<div style="position:absolute;left:272px;top:729.42px;font-size:19px;line-height:19px;font-weight:400;color:#303030;white-space:nowrap;transform:scaleX(0.92);transform-origin:0 0;">254/147/229</div>
<div style="position:absolute;left:447px;top:729.42px;font-size:19px;line-height:19px;font-weight:400;color:#303030;white-space:nowrap;transform:scaleX(0.92);transform-origin:0 0;">333</div>
<div style="position:absolute;left:555px;top:729.42px;font-size:19px;line-height:19px;font-weight:400;color:#303030;white-space:nowrap;transform:scaleX(0.92);transform-origin:0 0;">11</div>
<div style="position:absolute;left:600px;top:729.84px;font-size:18.5px;line-height:18.5px;font-weight:400;color:#2f9a35;white-space:nowrap;transform:scaleX(0.92);transform-origin:0 0;">1</div>
<div style="position:absolute;left:715px;top:729.42px;font-size:19px;line-height:19px;font-weight:400;color:#303030;white-space:nowrap;transform:scaleX(0.92);transform-origin:0 0;"><span style="color:#6c9e34">225</span><span style="color:#555">/</span><span style="color:#c42f3d">139</span></div>
<div style="position:absolute;left:827px;top:729.42px;font-size:19px;line-height:19px;font-weight:400;color:#303030;white-space:nowrap;transform:scaleX(0.92);transform-origin:0 0;">20</div>
<div style="position:absolute;left:947px;top:729.42px;font-size:19px;line-height:19px;font-weight:400;color:#303030;white-space:nowrap;transform:scaleX(0.92);transform-origin:0 0;">2.8K</div>
<div style="position:absolute;left:1004px;top:729.49px;font-size:19.5px;line-height:19.5px;font-weight:700;color:#dc2a30;white-space:nowrap;transform:scaleX(0.82);transform-origin:0 0;">Я</div>
<div style="position:absolute;left:1021px;top:729.42px;font-size:19px;line-height:19px;font-weight:400;color:#303030;white-space:nowrap;transform:scaleX(0.92);transform-origin:0 0;">1.3K</div>
<div style="position:absolute;left:1128.5px;top:730.26px;font-size:18px;line-height:18px;font-weight:400;color:#8f8f8f;white-space:nowrap;transform:scaleX(0.93);transform-origin:0 0;">21 дек. 2018</div>
<div style="position:absolute;left:156px;top:777.16px;font-size:18.5px;line-height:18.5px;font-weight:400;color:#4a4a4a;white-space:nowrap;transform:scaleX(0.92);transform-origin:0 0;">.ru</div>
<div style="position:absolute;left:272px;top:775.54px;font-size:19px;line-height:19px;font-weight:400;color:#303030;white-space:nowrap;transform:scaleX(0.92);transform-origin:0 0;">213/160/127</div>
<div style="position:absolute;left:447px;top:775.54px;font-size:19px;line-height:19px;font-weight:400;color:#303030;white-space:nowrap;transform:scaleX(0.92);transform-origin:0 0;">310</div>
<div style="position:absolute;left:555px;top:775.54px;font-size:19px;line-height:19px;font-weight:400;color:#303030;white-space:nowrap;transform:scaleX(0.92);transform-origin:0 0;">23</div>
<div style="position:absolute;left:715px;top:775.54px;font-size:19px;line-height:19px;font-weight:400;color:#303030;white-space:nowrap;transform:scaleX(0.92);transform-origin:0 0;"><span style="color:#6c9e34">117</span><span style="color:#555">/</span><span style="color:#c42f3d">143</span></div>
<div style="position:absolute;left:827px;top:775.54px;font-size:19px;line-height:19px;font-weight:400;color:#303030;white-space:nowrap;transform:scaleX(0.92);transform-origin:0 0;">70</div>
<div style="position:absolute;left:947px;top:775.54px;font-size:19px;line-height:19px;font-weight:400;color:#303030;white-space:nowrap;transform:scaleX(0.92);transform-origin:0 0;">237</div>
<div style="position:absolute;left:1004px;top:775.61px;font-size:19.5px;line-height:19.5px;font-weight:700;color:#dc2a30;white-space:nowrap;transform:scaleX(0.82);transform-origin:0 0;">Я</div>
<div style="position:absolute;left:1021px;top:775.54px;font-size:19px;line-height:19px;font-weight:400;color:#303030;white-space:nowrap;transform:scaleX(0.92);transform-origin:0 0;">211</div>
<div style="position:absolute;left:1128.5px;top:776.38px;font-size:18px;line-height:18px;font-weight:400;color:#8f8f8f;white-space:nowrap;transform:scaleX(0.93);transform-origin:0 0;">22 дек. 2018</div>
<div style="position:absolute;left:156px;top:823.28px;font-size:18.5px;line-height:18.5px;font-weight:400;color:#4a4a4a;white-space:nowrap;transform:scaleX(0.92);transform-origin:0 0;">l.by</div>
<div style="position:absolute;left:272px;top:821.66px;font-size:19px;line-height:19px;font-weight:400;color:#303030;white-space:nowrap;transform:scaleX(0.92);transform-origin:0 0;">74/89/104</div>
<div style="position:absolute;left:447px;top:821.66px;font-size:19px;line-height:19px;font-weight:400;color:#303030;white-space:nowrap;transform:scaleX(0.92);transform-origin:0 0;">156</div>
<div style="position:absolute;left:555px;top:821.66px;font-size:19px;line-height:19px;font-weight:400;color:#303030;white-space:nowrap;transform:scaleX(0.92);transform-origin:0 0;">18</div>
<div style="position:absolute;left:600px;top:822.08px;font-size:18.5px;line-height:18.5px;font-weight:400;color:#d42a38;white-space:nowrap;transform:scaleX(0.92);transform-origin:0 0;">5</div>
<div style="position:absolute;left:715px;top:821.66px;font-size:19px;line-height:19px;font-weight:400;color:#303030;white-space:nowrap;transform:scaleX(0.92);transform-origin:0 0;"><span style="color:#6c9e34">59</span><span style="color:#555">/</span><span style="color:#c42f3d">50</span></div>
<div style="position:absolute;left:827px;top:821.66px;font-size:19px;line-height:19px;font-weight:400;color:#303030;white-space:nowrap;transform:scaleX(0.92);transform-origin:0 0;">400</div>
<div style="position:absolute;left:947px;top:821.66px;font-size:19px;line-height:19px;font-weight:400;color:#303030;white-space:nowrap;transform:scaleX(0.92);transform-origin:0 0;">542</div>
<div style="position:absolute;left:1004px;top:821.73px;font-size:19.5px;line-height:19.5px;font-weight:700;color:#dc2a30;white-space:nowrap;transform:scaleX(0.82);transform-origin:0 0;">Я</div>
<div style="position:absolute;left:1021px;top:821.66px;font-size:19px;line-height:19px;font-weight:400;color:#303030;white-space:nowrap;transform:scaleX(0.92);transform-origin:0 0;">493</div>
<div style="position:absolute;left:1128.5px;top:822.50px;font-size:18px;line-height:18px;font-weight:400;color:#8f8f8f;white-space:nowrap;transform:scaleX(0.93);transform-origin:0 0;">19 дек. 2018</div>
<div style="position:absolute;left:156px;top:869.40px;font-size:18.5px;line-height:18.5px;font-weight:400;color:#4a4a4a;white-space:nowrap;transform:scaleX(0.92);transform-origin:0 0;">ır.by</div>
<div style="position:absolute;left:272px;top:867.78px;font-size:19px;line-height:19px;font-weight:400;color:#303030;white-space:nowrap;transform:scaleX(0.92);transform-origin:0 0;">273/122/77</div>
<div style="position:absolute;left:447px;top:867.78px;font-size:19px;line-height:19px;font-weight:400;color:#303030;white-space:nowrap;transform:scaleX(0.92);transform-origin:0 0;">244</div>
<div style="position:absolute;left:555px;top:867.78px;font-size:19px;line-height:19px;font-weight:400;color:#303030;white-space:nowrap;transform:scaleX(0.92);transform-origin:0 0;">8</div>
<div style="position:absolute;left:715px;top:867.78px;font-size:19px;line-height:19px;font-weight:400;color:#303030;white-space:nowrap;transform:scaleX(0.92);transform-origin:0 0;"><span style="color:#6c9e34">121</span><span style="color:#555">/</span><span style="color:#c42f3d">160</span></div>
<div style="position:absolute;left:827px;top:867.78px;font-size:19px;line-height:19px;font-weight:400;color:#303030;white-space:nowrap;transform:scaleX(0.92);transform-origin:0 0;">200</div>
<div style="position:absolute;left:947px;top:867.78px;font-size:19px;line-height:19px;font-weight:400;color:#303030;white-space:nowrap;transform:scaleX(0.92);transform-origin:0 0;">3.2K</div>
<div style="position:absolute;left:1004px;top:867.85px;font-size:19.5px;line-height:19.5px;font-weight:700;color:#dc2a30;white-space:nowrap;transform:scaleX(0.82);transform-origin:0 0;">Я</div>
<div style="position:absolute;left:1021px;top:867.78px;font-size:19px;line-height:19px;font-weight:400;color:#303030;white-space:nowrap;transform:scaleX(0.92);transform-origin:0 0;">5.1K</div>
<div style="position:absolute;left:1128.5px;top:868.62px;font-size:18px;line-height:18px;font-weight:400;color:#8f8f8f;white-space:nowrap;transform:scaleX(0.93);transform-origin:0 0;">18 дек. 2018</div>
</div></body></html>
